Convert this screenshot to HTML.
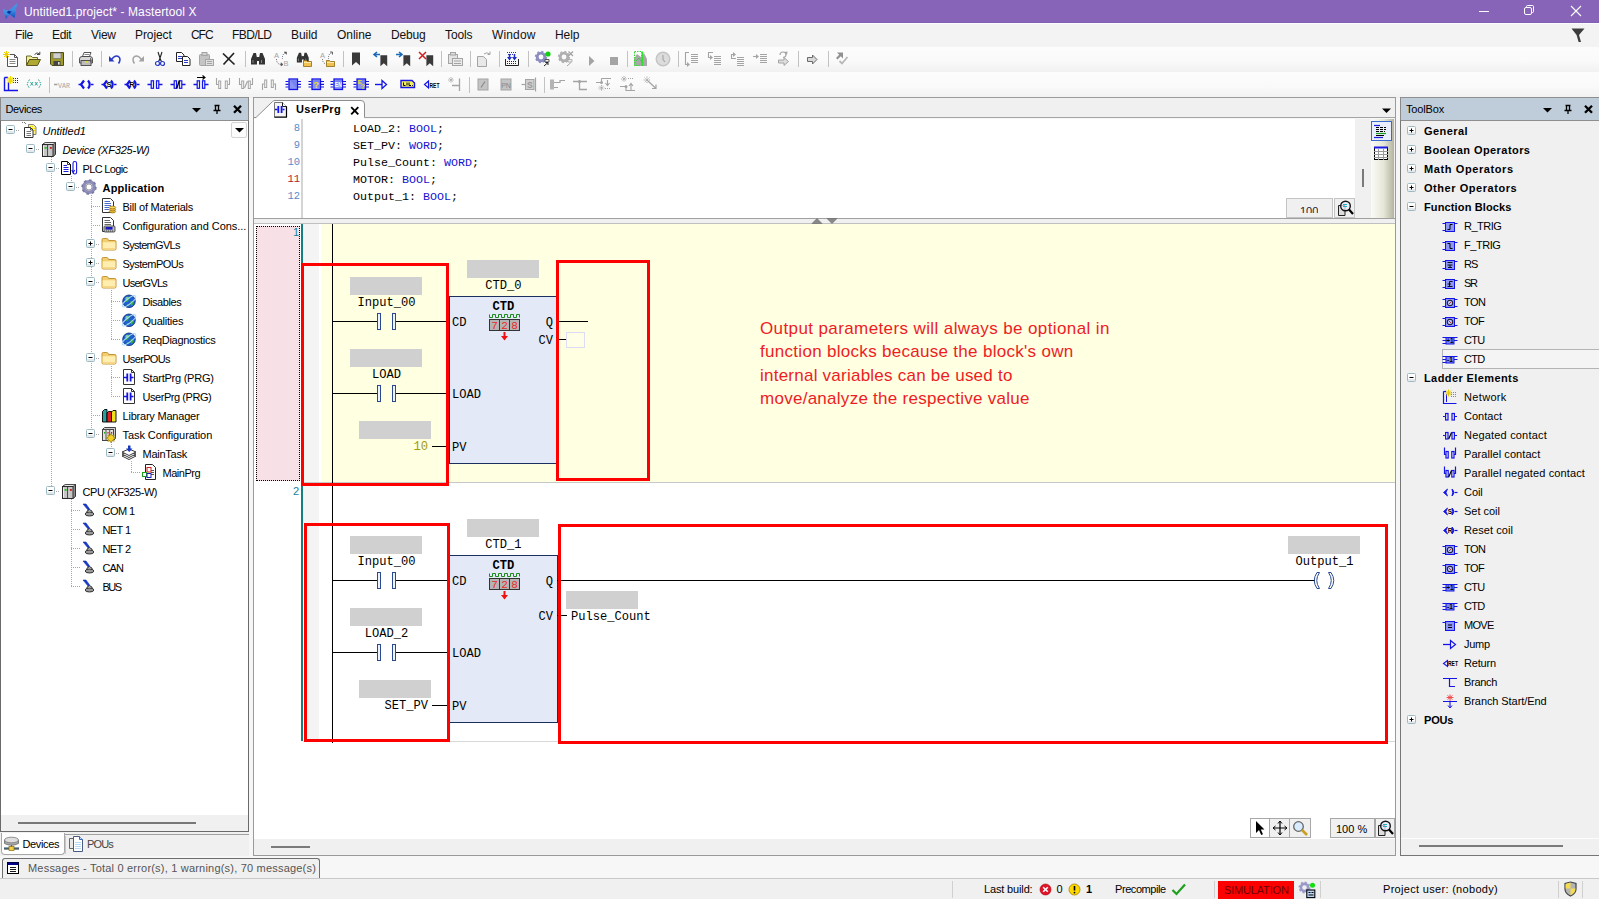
<!DOCTYPE html>
<html><head><meta charset="utf-8"><title>Mastertool X</title><style>
html,body{margin:0;padding:0}
body{width:1599px;height:899px;overflow:hidden;background:#f0f0f0;position:relative;font-family:"Liberation Sans","DejaVu Sans",sans-serif;font-size:11px;color:#000}
div,svg{position:absolute;box-sizing:border-box}
.t{white-space:nowrap;line-height:14px;height:14px}
.m{white-space:nowrap;line-height:16px;height:16px;font-size:12.5px;color:#111}
.c{white-space:nowrap;line-height:15px;height:15px;font-family:"Liberation Mono","DejaVu Sans Mono",monospace;font-size:11.67px}
.b{font-weight:bold}
.i{font-style:italic}
svg{overflow:visible}
</style></head><body>
<div style="left:0px;top:0px;width:1599px;height:23px;background:#8764b8"></div>
<div style="left:0px;top:22px;width:1599px;height:1px;background:#8260b3"></div>
<svg style="left:0px;top:0px" width="22" height="22" viewBox="0 0 22 22" ><defs><linearGradient id="lg1" x1="0" y1="0" x2="0" y2="1"><stop offset="0" stop-color="#4a96e2"/><stop offset="0.5" stop-color="#3f8ce0"/><stop offset="1" stop-color="#0a50c4"/></linearGradient></defs><path d="M17.3 3 L14.6 18 L6.6 12.2 Z" fill="url(#lg1)"/><path d="M2.6 9 L11.6 11.6 L6 18.9 Z" fill="url(#lg1)"/><path d="M6.6 12.2 L8.6 10.7 L11.6 11.6 L9.4 14.3 Z" fill="#0634a8"/></svg>
<div class="t" style="left:24px;top:4px;color:#fff;line-height:16px;height:16px;font-size:12px;letter-spacing:0.094px;">Untitled1.project* - Mastertool X</div>
<svg style="left:1478px;top:5px" width="12" height="12" viewBox="0 0 12 12" ><path d="M1 6.5 H11" stroke="#fff" stroke-width="1"/></svg>
<svg style="left:1523px;top:4px" width="12" height="12" viewBox="0 0 12 12" ><rect x="1.5" y="3.5" width="7" height="7" rx="1.5" fill="none" stroke="#fff"/><path d="M3.5 3.5 V2.5 Q3.5 1.5 4.5 1.5 H9.5 Q10.5 1.5 10.5 2.5 V7.5 Q10.5 8.5 9.5 8.5 H8.5" fill="none" stroke="#fff"/></svg>
<svg style="left:1570px;top:5px" width="12" height="12" viewBox="0 0 12 12" ><path d="M1 1 L11 11 M11 1 L1 11" stroke="#fff" stroke-width="1.1"/></svg>
<div style="left:0px;top:23px;width:1599px;height:24px;background:#f3f3f3;border-top:1px solid #fbfbfb"></div>
<div class="m" style="left:15px;top:27px;font-size:12px;letter-spacing:-0.384px;">File</div>
<div class="m" style="left:52px;top:27px;font-size:12px;letter-spacing:-0.344px;">Edit</div>
<div class="m" style="left:91px;top:27px;font-size:12px;letter-spacing:-0.273px;">View</div>
<div class="m" style="left:135px;top:27px;font-size:12px;letter-spacing:-0.078px;">Project</div>
<div class="m" style="left:191px;top:27px;font-size:12px;letter-spacing:-1.054px;">CFC</div>
<div class="m" style="left:232px;top:27px;font-size:12px;letter-spacing:-0.529px;">FBD/LD</div>
<div class="m" style="left:291px;top:27px;font-size:12px;letter-spacing:-0.037px;">Build</div>
<div class="m" style="left:337px;top:27px;font-size:12px;letter-spacing:-0.031px;">Online</div>
<div class="m" style="left:391px;top:27px;font-size:12px;letter-spacing:-0.172px;">Debug</div>
<div class="m" style="left:445px;top:27px;font-size:12px;letter-spacing:-0.102px;">Tools</div>
<div class="m" style="left:492px;top:27px;font-size:12px;letter-spacing:0.137px;">Window</div>
<div class="m" style="left:555px;top:27px;font-size:12px;letter-spacing:-0.045px;">Help</div>
<svg style="left:1570px;top:27px" width="16" height="16" viewBox="0 0 16 16" ><path d="M1.5 1.5 H14.5 L9 8 L11 15 L8.6 15 L6.6 8 Z" fill="#3c3c3c"/></svg>
<div style="left:0px;top:47px;width:1599px;height:25px;background:linear-gradient(#fcfcfc,#fafafa 55%,#f1f1f1)"></div>
<div style="left:0px;top:72px;width:1599px;height:25px;background:linear-gradient(#fcfcfc,#fafafa 55%,#f2f2f2)"></div>
<div style="left:0px;top:97px;width:1599px;height:1px;background:#ededed"></div>
<svg style="left:3px;top:51px" width="16" height="16" viewBox="0 0 16 16" ><path d="M4.5 3.5 H11.5 L14.5 6.5 V15.5 H4.5 Z" fill="#fff" stroke="#555"/><path d="M11.5 3.5 V6.5 H14.5" fill="none" stroke="#555"/><path d="M6.5 8.5 H12.5 M6.5 10.5 H12.5 M6.5 12.5 H12.5" stroke="#888"/><path d="M3.5 0 V7 M0 3.5 H7 M1 1 L6 6 M6 1 L1 6" stroke="#f0d000" stroke-width="1"/></svg>
<svg style="left:25px;top:51px" width="16" height="16" viewBox="0 0 16 16" ><path d="M1.5 5 H6 L7.5 6.5 H12.5 V9 H4.5 L1.5 14 Z" fill="#f2ee9a" stroke="#5a5a20" stroke-width="0.9"/><path d="M1.5 14.5 L4.5 8.5 H15.5 L12.5 14.5 Z" fill="#b0a830" stroke="#4a4a18" stroke-width="0.9"/><path d="M9.5 3.5 Q12 0.5 14.5 3 M14.8 0.8 V3.5 H12" fill="none" stroke="#333" stroke-width="0.9"/></svg>
<svg style="left:49px;top:51px" width="16" height="16" viewBox="0 0 16 16" ><path d="M1.5 1.5 H14.5 V14.5 H3 L1.5 13 Z" fill="#a09a28" stroke="#4a4a18"/><rect x="4" y="2" width="8" height="5.5" fill="#d0d0d0" stroke="#666" stroke-width="0.6"/><rect x="4.5" y="10" width="7" height="4.5" fill="#444"/><rect x="9" y="11" width="1.6" height="2.6" fill="#ddd"/></svg>
<div style="left:72px;top:51px;width:1px;height:16px;background:#c2c2c2"></div>
<svg style="left:78px;top:51px" width="16" height="16" viewBox="0 0 16 16" ><path d="M4.5 5.5 L6 1.5 H13 L11.5 5.5 Z" fill="#fff" stroke="#444" stroke-width="0.9"/><path d="M6.5 3.5 H11.5" stroke="#888"/><path d="M1.5 8 Q1.5 5.5 4 5.5 H12 Q14.5 5.5 14.5 8 V12 H1.5 Z" fill="#d8d8d8" stroke="#444" stroke-width="0.9"/><rect x="3" y="9.5" width="10" height="5" fill="#bbb" stroke="#444" stroke-width="0.9"/><path d="M7 10.8 H10" stroke="#f0e000" stroke-width="1.4"/><path d="M12.5 7 v4 M14 8 v3" stroke="#555" stroke-width="0.8"/></svg>
<div style="left:101px;top:51px;width:1px;height:16px;background:#c2c2c2"></div>
<svg style="left:107px;top:51px" width="16" height="16" viewBox="0 0 16 16" ><path d="M4.5 8.5 Q8 3.5 11.5 5.5 Q14.5 8 11.5 12.5" fill="none" stroke="#2a3ac8" stroke-width="1.5"/><path d="M2 5 V10.5 H7.5 Z" fill="#2a3ac8"/></svg>
<svg style="left:130px;top:51px" width="16" height="16" viewBox="0 0 16 16" ><g transform="translate(16,0) scale(-1,1)"><path d="M4.5 8.5 Q8 3.5 11.5 5.5 Q14.5 8 11.5 12.5" fill="none" stroke="#a4a4a4" stroke-width="1.5"/><path d="M2 5 V10.5 H7.5 Z" fill="#a4a4a4"/></g></svg>
<svg style="left:152px;top:51px" width="16" height="16" viewBox="0 0 16 16" ><path d="M6 1 L9 10 M10 1 L7 10" stroke="#222" stroke-width="1.1"/><circle cx="5.5" cy="12.5" r="2" fill="none" stroke="#2a3ac8" stroke-width="1.2"/><circle cx="10.5" cy="12.5" r="2" fill="none" stroke="#2a3ac8" stroke-width="1.2"/><path d="M7 9.5 L6.3 10.8 M9 9.5 L9.7 10.8" stroke="#2a3ac8" stroke-width="1.2"/></svg>
<svg style="left:175px;top:51px" width="16" height="16" viewBox="0 0 16 16" ><path d="M1.5 1.5 H6.5 L9 4 V10.5 H1.5 Z" fill="#fff" stroke="#222"/><path d="M3 5.5 H7 M3 7.5 H7" stroke="#2a3ac8"/><path d="M7.5 5.5 H12.5 L15 8 V14.5 H7.5 Z" fill="#fff" stroke="#222"/><path d="M9 9.5 H13 M9 11.5 H13" stroke="#2a3ac8"/></svg>
<svg style="left:198px;top:51px" width="16" height="16" viewBox="0 0 16 16" ><rect x="1.5" y="3.5" width="10" height="11" rx="1" fill="#c4c4c4" stroke="#a4a4a4"/><rect x="4" y="1.5" width="5" height="3" fill="#d0d0d0" stroke="#a4a4a4"/><rect x="7.5" y="8.5" width="8" height="6" fill="#e0e0e0" stroke="#a4a4a4"/><path d="M9 10.5 H14 M9 12.5 H14" stroke="#a4a4a4"/></svg>
<svg style="left:221px;top:51px" width="16" height="16" viewBox="0 0 16 16" ><path d="M2 2.5 L13.5 13.5 M13 2 L2.5 13.5" stroke="#222" stroke-width="1.7"/></svg>
<div style="left:245px;top:51px;width:1px;height:16px;background:#c2c2c2"></div>
<svg style="left:250px;top:51px" width="16" height="16" viewBox="0 0 16 16" ><path d="M3.5 2 H6 L7 7 V13.5 H1 V8 Z M10 2 H12.5 L15 8 V13.5 H9 V7 Z" fill="#333"/><rect x="6.5" y="6" width="3" height="4" fill="#333"/><path d="M3 9 V12 M11.5 9 V12" stroke="#999" stroke-width="0.8"/></svg>
<svg style="left:273px;top:51px" width="16" height="16" viewBox="0 0 16 16" ><text x="1" y="7" font-size="7.5" fill="#a4a4a4" font-family="Liberation Sans,sans-serif">A</text><text x="10.5" y="15" font-size="7.5" fill="#a4a4a4" font-family="Liberation Sans,sans-serif">B</text><path d="M3.5 8 Q3.5 13 8 13.5" fill="none" stroke="#555" stroke-dasharray="1 1.2"/><path d="M12.5 2 Q9 3 9.5 8" fill="none" stroke="#555" stroke-dasharray="1 1.2"/><path d="M8 11.8 L10 13.5 L8 15 Z M11 1 H13.5 V3.5" fill="#555" stroke="#555" stroke-width="0.6"/></svg>
<svg style="left:296px;top:51px" width="16" height="16" viewBox="0 0 16 16" ><g transform="scale(0.85)"><path d="M3.5 2 H6 L7 7 V13.5 H1 V8 Z M10 2 H12.5 L15 8 V13.5 H9 V7 Z" fill="#333"/><rect x="6.5" y="6" width="3" height="4" fill="#333"/><path d="M3 9 V12 M11.5 9 V12" stroke="#999" stroke-width="0.8"/></g><path d="M7.5 9.5 H10.5 L11.5 10.5 H15.5 V15.5 H7.5 Z" fill="#f0c050" stroke="#8a6a10" stroke-width="0.8"/><path d="M8 11.5 H15" stroke="#fbe8a8"/></svg>
<svg style="left:319px;top:51px" width="16" height="16" viewBox="0 0 16 16" ><text x="1" y="7" font-size="7.5" fill="#a4a4a4" font-family="Liberation Sans,sans-serif">A</text><path d="M3.5 8 Q3.5 12 7 13" fill="none" stroke="#555" stroke-dasharray="1 1.2"/><path d="M12.5 2 Q9 3 9.5 8" fill="none" stroke="#555" stroke-dasharray="1 1.2"/><path d="M11 1 H13.5 V3.5" fill="none" stroke="#555" stroke-width="0.9"/><path d="M7.5 9.5 H10.5 L11.5 10.5 H15.5 V15.5 H7.5 Z" fill="#f0c050" stroke="#8a6a10" stroke-width="0.8"/><path d="M8 11.5 H15" stroke="#fbe8a8"/></svg>
<div style="left:343px;top:51px;width:1px;height:16px;background:#c2c2c2"></div>
<svg style="left:348px;top:51px" width="16" height="16" viewBox="0 0 16 16" ><path transform="translate(0,0) scale(1)" d="M4 1.5 H12 V14.5 L8 11 L4 14.5 Z" fill="#3a3a3a"/></svg>
<svg style="left:372px;top:51px" width="16" height="16" viewBox="0 0 16 16" ><path transform="translate(5,3) scale(0.85)" d="M4 1.5 H12 V14.5 L8 11 L4 14.5 Z" fill="#3a3a3a"/><path d="M8 3.5 H2.5 M5 1 L2 3.5 L5 6" fill="none" stroke="#1a6ab8" stroke-width="1.6"/></svg>
<svg style="left:395px;top:51px" width="16" height="16" viewBox="0 0 16 16" ><path transform="translate(5,3) scale(0.85)" d="M4 1.5 H12 V14.5 L8 11 L4 14.5 Z" fill="#3a3a3a"/><path d="M1 3.5 H6.5 M4 1 L7 3.5 L4 6" fill="none" stroke="#1a6ab8" stroke-width="1.6"/></svg>
<svg style="left:418px;top:51px" width="16" height="16" viewBox="0 0 16 16" ><path transform="translate(5,3) scale(0.85)" d="M4 1.5 H12 V14.5 L8 11 L4 14.5 Z" fill="#3a3a3a"/><path d="M1 1 L8 8 M8 1 L1 8" stroke="#d02020" stroke-width="1.5"/></svg>
<div style="left:441px;top:51px;width:1px;height:16px;background:#c2c2c2"></div>
<svg style="left:447px;top:51px" width="16" height="16" viewBox="0 0 16 16" ><rect x="1.5" y="3.5" width="9" height="9" fill="#e4e4e4" stroke="#a4a4a4"/><rect x="3.5" y="1.5" width="5" height="2.5" fill="#ddd" stroke="#a4a4a4"/><rect x="5.5" y="7.5" width="10" height="7" fill="#ececec" stroke="#a4a4a4"/><path d="M7 10 H14 M7 12.5 H14" stroke="#a4a4a4"/></svg>
<div style="left:470px;top:51px;width:1px;height:16px;background:#c2c2c2"></div>
<svg style="left:475px;top:51px" width="16" height="16" viewBox="0 0 16 16" ><path d="M2.5 5.5 H8.5 L11.5 8.5 V15.5 H2.5 Z" fill="#e8e8e8" stroke="#a4a4a4"/><path d="M9 3 Q12 0.5 14.5 3 M15 0.5 V3.5 H12.5" fill="none" stroke="#a4a4a4"/></svg>
<div style="left:499px;top:51px;width:1px;height:16px;background:#c2c2c2"></div>
<svg style="left:504px;top:51px" width="16" height="16" viewBox="0 0 16 16" ><path d="M1.5 8 V14.5 H14.5 V8" fill="none" stroke="#222"/><path d="M3 10.5 H13 M3 12.5 H13" stroke="#222" stroke-dasharray="1 1"/><path d="M3 1.5 H13 M4 3.5 H12" stroke="#2030c0" stroke-dasharray="1 1"/><path d="M5.5 3 V8 M10.5 3 V8" stroke="#2030c0" stroke-width="1.5"/><path d="M3 6 L5.5 9.5 L8 6 Z M8 6 L10.5 9.5 L13 6 Z" fill="#2030c0"/></svg>
<div style="left:528px;top:51px;width:1px;height:16px;background:#c2c2c2"></div>
<svg style="left:535px;top:51px" width="16" height="16" viewBox="0 0 16 16" ><circle cx="6" cy="6" r="3.8" fill="none" stroke="#8c8cc0" stroke-width="2.8"/><circle cx="6" cy="6" r="5.4" fill="none" stroke="#8c8cc0" stroke-width="1.5" stroke-dasharray="2 2.2"/><circle cx="13" cy="3" r="2.6" fill="#10d010"/><path d="M10 8.5 H14 V11 H10 Z" fill="#eee" stroke="#333" stroke-width="0.8"/><path d="M9 15 L13 11.5 M13 11.5 V14 M13 11.5 H10.5" stroke="#222" stroke-width="1" fill="none"/></svg>
<svg style="left:558px;top:51px" width="16" height="16" viewBox="0 0 16 16" ><circle cx="6" cy="6" r="3.8" fill="none" stroke="#b0b0b0" stroke-width="2.8"/><circle cx="6" cy="6" r="5.4" fill="none" stroke="#b0b0b0" stroke-width="1.5" stroke-dasharray="2 2.2"/><path d="M10.5 0.5 L15 5 M15 0.5 L10.5 5" stroke="#a4a4a4" stroke-width="1.2"/><path d="M10 8.5 H14 V11 H10 Z" fill="#eee" stroke="#a4a4a4" stroke-width="0.8"/><path d="M9 15 L13 11.5" stroke="#a4a4a4" stroke-width="1"/></svg>
<svg style="left:584px;top:51px" width="16" height="16" viewBox="0 0 16 16" ><path d="M5 5 L10.5 10 L5 15 Z" fill="#a4a4a4"/></svg>
<svg style="left:606px;top:51px" width="16" height="16" viewBox="0 0 16 16" ><rect x="4" y="6" width="8" height="8" fill="#a4a4a4"/></svg>
<div style="left:627px;top:51px;width:1px;height:16px;background:#c2c2c2"></div>
<svg style="left:632px;top:51px" width="16" height="16" viewBox="0 0 16 16" ><path d="M2 8 L5 3 L9 6 L12 2 L15 8 V15 H2 Z" fill="#a8a8a8"/><rect x="2.5" y="0.5" width="7" height="14" fill="none" stroke="#30e030" stroke-dasharray="1.5 1"/><path d="M10.5 0.5 V15" stroke="#30e030" stroke-width="1.3"/><path d="M4 10 L7 7 L10 11" stroke="#50c050" fill="none"/></svg>
<svg style="left:655px;top:51px" width="16" height="16" viewBox="0 0 16 16" ><circle cx="8" cy="8" r="6.8" fill="#dcdcdc" stroke="#c4c4c4" stroke-width="1.4"/><path d="M8 4 V8.5 L10 11" stroke="#a4a4a4" stroke-width="1.1" fill="none"/></svg>
<div style="left:678px;top:51px;width:1px;height:16px;background:#c2c2c2"></div>
<svg style="left:683px;top:51px" width="16" height="16" viewBox="0 0 16 16" ><path d="M8 3.5 H15 M8 5.5 H15 M8 7.5 H15 M8 9.5 H15 M8 11.5 H15" stroke="#a4a4a4"/><path d="M6 1.5 H2.5 V13.5 H5" fill="none" stroke="#a4a4a4" stroke-width="1.1"/><path d="M4 11 L7 13.5 L4 16 Z" fill="#a4a4a4"/></svg>
<svg style="left:706px;top:51px" width="16" height="16" viewBox="0 0 16 16" ><path d="M8 5.5 H15 M8 7.5 H15 M8 9.5 H15 M8 11.5 H15 M8 13.5 H15" stroke="#a4a4a4"/><path d="M7 1.5 H2.5 V6.5 H5" fill="none" stroke="#a4a4a4" stroke-width="1.1"/><path d="M4 4 L7 6.5 L4 9 Z" fill="#a4a4a4"/></svg>
<svg style="left:729px;top:51px" width="16" height="16" viewBox="0 0 16 16" ><path d="M8 6.5 H15 M8 8.5 H15 M8 10.5 H15 M8 12.5 H15 M8 14.5 H15" stroke="#a4a4a4"/><path d="M7 7.5 H2.5 V3.5 H5" fill="none" stroke="#a4a4a4" stroke-width="1.1"/><path d="M4 1 L7 3.5 L4 6 Z" fill="#a4a4a4"/></svg>
<svg style="left:752px;top:51px" width="16" height="16" viewBox="0 0 16 16" ><path d="M8 3.5 H15 M8 5.5 H15 M8 7.5 H15 M8 9.5 H15 M8 11.5 H15" stroke="#a4a4a4"/><path d="M1 5.5 H5" stroke="#a4a4a4" stroke-width="1.1"/><path d="M4 3 L7 5.5 L4 8 Z" fill="#a4a4a4"/></svg>
<svg style="left:775px;top:51px" width="16" height="16" viewBox="0 0 16 16" ><path d="M5 4 Q5 1 8 1 Q11 1 11 4 Q11 6 8 6.5" fill="none" stroke="#a4a4a4" stroke-width="1.1"/><path d="M9 1 L12.5 0.5 L12 4 Z" fill="#a4a4a4"/><path d="M3.5 9 H9 V6.5 L13.5 10.5 L9 14.5 V12 H3.5 Z" fill="#ddd" stroke="#a4a4a4"/></svg>
<div style="left:798px;top:51px;width:1px;height:16px;background:#c2c2c2"></div>
<svg style="left:804px;top:51px" width="16" height="16" viewBox="0 0 16 16" ><path d="M3.5 6.5 H8.5 V4 L13 8.5 L8.5 13 V10.5 H3.5 Z" fill="#d8d8d8" stroke="#6a6a6a" stroke-width="1"/></svg>
<div style="left:828px;top:51px;width:1px;height:16px;background:#c2c2c2"></div>
<svg style="left:834px;top:51px" width="16" height="16" viewBox="0 0 16 16" ><path d="M3 1.5 H9 V7.5 L6.8 5.3 L3.5 8.5 L2 7 L5.2 3.7 Z" fill="#909090"/><path d="M5.5 10 L8 12.5 L13.5 6" fill="none" stroke="#b8b8b8" stroke-width="1.8"/></svg>
<svg style="left:3px;top:76px" width="16" height="16" viewBox="0 0 16 16" ><path d="M1.5 1.5 V14.5 H15 M1.5 1.5 H5" stroke="#1414e6" fill="none" stroke-width="1.4"/><path d="M5.5 6 V14" stroke="#1414e6" stroke-width="1.4"/><path d="M10 2.5 H16 M10 4.5 H16 M10 6.5 H16" stroke="#1414e6" stroke-dasharray="1 1"/><path d="M7.5 0 V8 M3.5 4 H11.5 M4.8 1.3 L10.2 6.7 M10.2 1.3 L4.8 6.7" stroke="#f2dc00" stroke-width="1.1"/></svg>
<svg style="left:26px;top:76px" width="16" height="16" viewBox="0 0 16 16" ><path d="M3.5 3.5 L1 8 L3.5 12.5 M12.5 3.5 L15 8 L12.5 12.5" fill="none" stroke="#20a090" stroke-dasharray="1.6 1"/><path d="M4.5 6 L7 9.5 M7 6 L4.5 9.5 M9 6 L11.5 9.5 M11.5 6 L9 9.5" stroke="#20a090" stroke-width="0.9"/></svg>
<div style="left:49px;top:77px;width:1px;height:16px;background:#c2c2c2"></div>
<svg style="left:54px;top:76px" width="16" height="16" viewBox="0 0 16 16" ><path d="M0 8.5 H3.5" stroke="#a4a4a4" stroke-width="1.6"/><text x="4" y="11.5" font-size="7.5" fill="#a4a4a4" font-family="Liberation Mono,monospace" textLength="12" lengthAdjust="spacingAndGlyphs">VAR</text></svg>
<svg style="left:78px;top:76px" width="16" height="16" viewBox="0 0 16 16" ><path d="M0.5 8.5 H3 M13 8.5 H15.5" stroke="#1414e6" stroke-width="1.3"/><path d="M6 4.5 L3 8.5 L6 12.5 M10 4.5 Q13.5 8.5 10 12.5" stroke="#1414e6" stroke-width="2.2" fill="none"/></svg>
<svg style="left:101px;top:76px" width="16" height="16" viewBox="0 0 16 16" ><path d="M0.5 8.5 H3 M13 8.5 H15.5" stroke="#1414e6" stroke-width="1.3"/><path d="M6 4.5 L3 8.5 L6 12.5 M10 4.5 Q13.5 8.5 10 12.5" stroke="#1414e6" stroke-width="2.2" fill="none"/><text x="8" y="11.2" font-size="7.5" font-weight="bold" text-anchor="middle" fill="#000" font-family="Liberation Sans,sans-serif">S</text></svg>
<svg style="left:124px;top:76px" width="16" height="16" viewBox="0 0 16 16" ><path d="M0.5 8.5 H3 M13 8.5 H15.5" stroke="#1414e6" stroke-width="1.3"/><path d="M6 4.5 L3 8.5 L6 12.5 M10 4.5 Q13.5 8.5 10 12.5" stroke="#1414e6" stroke-width="2.2" fill="none"/><text x="8" y="11.2" font-size="7.5" font-weight="bold" text-anchor="middle" fill="#000" font-family="Liberation Sans,sans-serif">R</text></svg>
<svg style="left:147px;top:76px" width="16" height="16" viewBox="0 0 16 16" ><path d="M0.5 8.5 H4 M12 8.5 H15.5" stroke="#1414e6" stroke-width="1.3"/><rect x="4.2" y="4.8" width="2.3" height="7.5" fill="none" stroke="#1414e6" stroke-width="1.2"/><rect x="9.5" y="4.8" width="2.3" height="7.5" fill="none" stroke="#1414e6" stroke-width="1.2"/></svg>
<svg style="left:170px;top:76px" width="16" height="16" viewBox="0 0 16 16" ><path d="M0.5 8.5 H4 M12 8.5 H15.5" stroke="#1414e6" stroke-width="1.3"/><rect x="4.2" y="4.8" width="2.3" height="7.5" fill="none" stroke="#1414e6" stroke-width="1.2"/><rect x="9.5" y="4.8" width="2.3" height="7.5" fill="none" stroke="#1414e6" stroke-width="1.2"/><path d="M6.8 12.5 L9.3 4.5" stroke="#000" stroke-width="1.3"/></svg>
<svg style="left:193px;top:76px" width="16" height="16" viewBox="0 0 16 16" ><path d="M0.5 8.5 H4 M12 8.5 H15.5" stroke="#1414e6" stroke-width="1.3"/><rect x="4.2" y="4.8" width="2.3" height="7.5" fill="none" stroke="#1414e6" stroke-width="1.2"/><rect x="9.5" y="4.8" width="2.3" height="7.5" fill="none" stroke="#1414e6" stroke-width="1.2"/><path d="M4 1.5 H11.5 M9.5 -0.5 L12 1.5 L9.5 3.5" stroke="#000" stroke-width="1.1" fill="none"/></svg>
<svg style="left:215px;top:76px" width="16" height="16" viewBox="0 0 16 16" ><path d="M1.5 2 V8.5 H3.5 M14.5 2 V8.5 H12.5" stroke="#a4a4a4" stroke-width="1.1" fill="none"/><rect x="3.7" y="5" width="2" height="7.5" fill="none" stroke="#a4a4a4"/><rect x="10.3" y="5" width="2" height="7.5" fill="none" stroke="#a4a4a4"/></svg>
<svg style="left:238px;top:76px" width="16" height="16" viewBox="0 0 16 16" ><path d="M1.5 2 V8.5 H3.5 M14.5 2 V8.5 H12.5" stroke="#a4a4a4" stroke-width="1.1" fill="none"/><rect x="3.7" y="5" width="2" height="7.5" fill="none" stroke="#a4a4a4"/><rect x="10.3" y="5" width="2" height="7.5" fill="none" stroke="#a4a4a4"/><path d="M6.5 12 L9.5 5" stroke="#a4a4a4" stroke-width="1.2"/></svg>
<svg style="left:261px;top:76px" width="16" height="16" viewBox="0 0 16 16" ><path d="M1.5 14 V8 H3.5 M14.5 14 V8 H12.5" stroke="#a4a4a4" stroke-width="1.1" fill="none"/><rect x="3.7" y="4" width="2" height="7.5" fill="none" stroke="#a4a4a4"/><rect x="10.3" y="4" width="2" height="7.5" fill="none" stroke="#a4a4a4"/></svg>
<svg style="left:285px;top:76px" width="16" height="16" viewBox="0 0 16 16" ><rect x="4" y="3" width="8.5" height="10.5" fill="#8a94f4" stroke="#1414e6" stroke-width="1.3"/><path d="M4.6 3.6 H12 V13 Z" fill="#6a76ee" opacity="0.6"/><path d="M0.5 5.5 H3.5 M0.5 8.3 H3.5 M0.5 11 H3.5 M13 5.5 H16 M13 8.3 H16 M13 11 H16" stroke="#1414e6" stroke-width="1.2"/></svg>
<svg style="left:308px;top:76px" width="16" height="16" viewBox="0 0 16 16" ><rect x="4" y="3" width="8.5" height="10.5" fill="#8a94f4" stroke="#1414e6" stroke-width="1.3"/><path d="M4.6 3.6 H12 V13 Z" fill="#6a76ee" opacity="0.6"/><path d="M0.5 5.5 H3.5 M0.5 8.3 H3.5 M0.5 11 H3.5 M13 5.5 H16 M13 8.3 H16 M13 11 H16" stroke="#1414e6" stroke-width="1.2"/><text x="8.3" y="11.5" font-size="9" font-weight="bold" text-anchor="middle" fill="#f0e020" font-family="Liberation Sans,sans-serif">?</text></svg>
<svg style="left:330px;top:76px" width="16" height="16" viewBox="0 0 16 16" ><rect x="4" y="3" width="8.5" height="10.5" fill="#8a94f4" stroke="#1414e6" stroke-width="1.3"/><path d="M4.6 3.6 H12 V13 Z" fill="#6a76ee" opacity="0.6"/><path d="M0.5 5.5 H3.5 M0.5 8.3 H3.5 M0.5 11 H3.5 M13 5.5 H16 M13 8.3 H16 M13 11 H16" stroke="#1414e6" stroke-width="1.2"/><text x="8.3" y="10.5" font-size="6.5" font-weight="bold" text-anchor="middle" fill="#fff" font-family="Liberation Sans,sans-serif" textLength="7" lengthAdjust="spacingAndGlyphs">EN</text></svg>
<svg style="left:353px;top:76px" width="16" height="16" viewBox="0 0 16 16" ><rect x="4" y="3" width="8.5" height="10.5" fill="#8a94f4" stroke="#1414e6" stroke-width="1.3"/><path d="M4.6 3.6 H12 V13 Z" fill="#6a76ee" opacity="0.6"/><path d="M0.5 5.5 H3.5 M0.5 8.3 H3.5 M0.5 11 H3.5 M13 5.5 H16 M13 8.3 H16 M13 11 H16" stroke="#1414e6" stroke-width="1.2"/><text x="6.8" y="8" font-size="6" font-weight="bold" text-anchor="middle" fill="#f0e020" font-family="Liberation Sans,sans-serif">E</text><text x="9.8" y="12.8" font-size="7" font-weight="bold" text-anchor="middle" fill="#f0e020" font-family="Liberation Sans,sans-serif">?</text></svg>
<svg style="left:374px;top:76px" width="16" height="16" viewBox="0 0 16 16" ><path d="M1 8.5 H8" stroke="#1414e6" stroke-width="1.4"/><path d="M8 4.5 L12.5 8.5 L8 12.5 Z" fill="none" stroke="#1414e6" stroke-width="1.3"/></svg>
<svg style="left:400px;top:76px" width="16" height="16" viewBox="0 0 16 16" ><path d="M1 4.5 H12 L14.5 7 V11.5 H1 Z" fill="#f4f060" stroke="#1414e6" stroke-width="1.4"/><path d="M3.5 6.5 V9.5 H5.5 M7 6.5 V9.5 M9 6.5 V9.5 H11 M12.5 9 V9.8" stroke="#000" stroke-width="1" fill="none"/></svg>
<svg style="left:423px;top:76px" width="16" height="16" viewBox="0 0 16 16" ><path d="M5.5 5 L1.5 8.5 L5.5 12 Z" fill="none" stroke="#1414e6" stroke-width="1.2"/><text x="6.5" y="11.5" font-size="7.5" font-weight="bold" fill="#000" font-family="Liberation Sans,sans-serif" textLength="10" lengthAdjust="spacingAndGlyphs">RET</text></svg>
<svg style="left:446px;top:76px" width="16" height="16" viewBox="0 0 16 16" ><path d="M5 1 V7 M2 4 H8 M2.9000000000000004 1.9000000000000004 L7.1 6.1 M7.1 1.9000000000000004 L2.9000000000000004 6.1" stroke="#a4a4a4" stroke-width="0.9" stroke-dasharray="1.2 0.6"/><path d="M6 9.5 H13.5 M13.5 2.5 V15" stroke="#a4a4a4" stroke-width="1.3" fill="none"/></svg>
<div style="left:469px;top:77px;width:1px;height:16px;background:#c2c2c2"></div>
<svg style="left:475px;top:76px" width="16" height="16" viewBox="0 0 16 16" ><rect x="3" y="3" width="10" height="11" fill="#c4c4c4" stroke="#a4a4a4"/><path d="M6 11.5 L10 5.5" stroke="#8a8a8a" stroke-width="1.2"/></svg>
<svg style="left:498px;top:76px" width="16" height="16" viewBox="0 0 16 16" ><rect x="3" y="3" width="10" height="11" fill="#c4c4c4" stroke="#a4a4a4"/><text x="8" y="11.5" font-size="7" text-anchor="middle" fill="#888" font-family="Liberation Sans,sans-serif">PN</text></svg>
<svg style="left:521px;top:76px" width="16" height="16" viewBox="0 0 16 16" ><path d="M0.5 8.5 H4" stroke="#a4a4a4" stroke-width="1.2"/><rect x="4.5" y="3.5" width="8.5" height="10" fill="#d0d0d0" stroke="#a4a4a4"/><path d="M14.5 1.5 V15.5" stroke="#a4a4a4" stroke-width="1.2"/><text x="8.8" y="12" font-size="8.5" font-weight="bold" text-anchor="middle" fill="#999" font-family="Liberation Sans,sans-serif">S</text></svg>
<div style="left:544px;top:77px;width:1px;height:16px;background:#c2c2c2"></div>
<svg style="left:549px;top:76px" width="16" height="16" viewBox="0 0 16 16" ><rect x="1" y="3.5" width="4" height="10" fill="#b4b4b4"/><path d="M5 11.5 H9 M5 6.5 H11 V4.5 H16" stroke="#a4a4a4" stroke-width="1.2" fill="none"/></svg>
<svg style="left:572px;top:76px" width="16" height="16" viewBox="0 0 16 16" ><path d="M1 5.5 H15 M7.5 5.5 V13.5 H15" stroke="#a4a4a4" stroke-width="1.3" fill="none"/><circle cx="7.5" cy="5.5" r="1.6" fill="#a4a4a4"/></svg>
<svg style="left:595px;top:76px" width="16" height="16" viewBox="0 0 16 16" ><path d="M1 6.5 H6.5 M6.5 2.5 V6.5 M6.5 2.5 H16" stroke="#a4a4a4" stroke-width="1.1" fill="none"/><circle cx="6.5" cy="6.5" r="1.5" fill="#a4a4a4"/><path d="M12.5 4 V9 M10.5 7 L12.5 9.5 L14.5 7" stroke="#a4a4a4" fill="none" stroke-width="1.1"/><path d="M6.5 9 V15 M3.5 12 H9.5 M4.4 9.9 L8.6 14.1 M8.6 9.9 L4.4 14.1" stroke="#a4a4a4" stroke-width="0.9" stroke-dasharray="1.2 0.6"/><path d="M10 12.5 H16" stroke="#a4a4a4" stroke-dasharray="1 1"/></svg>
<svg style="left:619px;top:76px" width="16" height="16" viewBox="0 0 16 16" ><path d="M5 0 V6 M2 3 H8 M2.9000000000000004 0.9000000000000004 L7.1 5.1 M7.1 0.9000000000000004 L2.9000000000000004 5.1" stroke="#a4a4a4" stroke-width="0.9" stroke-dasharray="1.2 0.6"/><path d="M9 2.5 H15" stroke="#a4a4a4" stroke-dasharray="1 1"/><path d="M1 10.5 H7 M7 10.5 V14.5 H16" stroke="#a4a4a4" stroke-width="1.1" fill="none"/><circle cx="7" cy="10.5" r="1.5" fill="#a4a4a4"/><path d="M12 14 V8 M10 10 L12 7.5 L14 10" stroke="#a4a4a4" fill="none" stroke-width="1.1"/></svg>
<svg style="left:642px;top:76px" width="16" height="16" viewBox="0 0 16 16" ><path d="M5 0.5 V7.5 M1.5 4 H8.5 M2.5500000000000003 1.5500000000000003 L7.449999999999999 6.449999999999999 M7.449999999999999 1.5500000000000003 L2.5500000000000003 6.449999999999999" stroke="#a4a4a4" stroke-width="0.9" stroke-dasharray="1.2 0.6"/><path d="M6 5 L14 12.5 M14 8.5 V12.5 H10" stroke="#a4a4a4" stroke-width="1.2" fill="none"/></svg>
<div style="left:0px;top:98px;width:1599px;height:758px;background:#f6f6f6"></div>
<div style="left:0px;top:97px;width:249px;height:23px;background:#bfcddb;border-top:1px solid #8e8e8e;border-left:1px solid #8a8a8a;border-right:1px solid #8a8a8a"></div>
<div class="t" style="left:5.5px;top:102px;font-size:11px;letter-spacing:-0.375px;">Devices</div>
<svg style="left:190.5px;top:107px" width="12" height="8" viewBox="0 0 12 8" ><path d="M1 1 H10 L5.5 5.5 Z" fill="#000"/></svg>
<svg style="left:211.5px;top:104px" width="10" height="12" viewBox="0 0 10 12" ><path d="M2.5 1.5 H7.5 M3.5 1.5 V6 M6.5 1.5 V6 M1.5 6.5 H8.5 M5 6.5 V10" stroke="#000" stroke-width="1.3" fill="none"/></svg>
<svg style="left:231.5px;top:104px" width="11" height="10" viewBox="0 0 11 10" ><path d="M2 1.7 L9 8.7 M9 1.7 L2 8.7" stroke="#000" stroke-width="2.3"/></svg>
<div style="left:0px;top:120px;width:249px;height:712px;background:#fff;border:1px solid #6a6a6a;border-top:1px solid #8e8e8e"></div>
<div style="left:231px;top:122px;width:16px;height:16px;background:#fcfcfc;border:1px solid #d4d4d4;border-radius:2px"></div>
<svg style="left:234px;top:127px" width="11" height="7" viewBox="0 0 11 7" ><path d="M1 1 H10 L5.5 5.5 Z" fill="#000"/></svg>
<div style="left:1px;top:815px;width:247px;height:16px;background:#f0f0f0"></div>
<div style="left:18px;top:822px;width:178px;height:2px;background:#787878"></div>
<div style="left:0px;top:832px;width:249px;height:24px;background:#f0f0f0"></div>
<div style="left:1px;top:833px;width:64px;height:22px;background:#fff;border:1px solid #a8a8a8;border-top:none;border-radius:0 0 4px 4px"></div>
<div class="t" style="left:22.5px;top:837px;font-size:11px;letter-spacing:-0.346px;">Devices</div>
<div class="t" style="left:87px;top:837px;font-size:11px;letter-spacing:-0.834px;color:#444">POUs</div>
<div style="left:65px;top:836px;width:1px;height:18px;background:#c8c8c8"></div>
<div style="left:65px;top:834px;width:184px;height:1px;background:#a0a0a0"></div>
<svg style="left:3px;top:836px" width="17" height="16" viewBox="0 0 17 16" ><path d="M1.5 4 V7.5 Q8.5 11 15.5 7.5 V4" fill="#a8a8a8" stroke="#666" stroke-width="0.8"/><ellipse cx="8.5" cy="4" rx="7" ry="2.8" fill="#dedede" stroke="#777" stroke-width="0.8"/><path d="M8.5 9 V12" stroke="#555"/><path d="M1 12.5 H16" stroke="#222" stroke-width="2"/><path d="M1 12 H16" stroke="#7ab8e8" stroke-width="0.8"/><rect x="6" y="10.5" width="5" height="4" fill="#f0d040" stroke="#8a6a10" stroke-width="0.7"/></svg>
<svg style="left:69px;top:836px" width="15" height="16" viewBox="0 0 15 16" ><path d="M0.5 2.5 H6.5 V12.5 H0.5 Z" fill="#e8e8e8" stroke="#666"/><path d="M4.5 0.5 H10.5 L13.5 3.5 V15.5 H4.5 Z" fill="#fff" stroke="#4a5a80"/><path d="M6 6.5 H12 M6 8.5 H12 M6 10.5 H12 M6 12.5 H12" stroke="#b8d8f8"/><path d="M10.5 0.5 V3.5 H13.5" fill="#cfe0ff" stroke="#2a6ad0"/></svg>
<div style="left:0px;top:856px;width:1599px;height:23px;background:#f7f7f7"></div>
<div style="left:2px;top:858px;width:318px;height:21px;background:#f0f0f0;border:1px solid #6e6e6e;border-bottom:none;border-radius:3px 3px 0 0"></div>
<svg style="left:7px;top:862px" width="12" height="12" viewBox="0 0 12 12" ><rect x="0.5" y="0.5" width="11" height="11" fill="#fff" stroke="#000"/><rect x="0.5" y="0.5" width="11" height="2.5" fill="#00008b"/><path d="M3 5.5 H9 M3 7.5 H9 M3 9.5 H9" stroke="#000" stroke-width="0.9"/></svg>
<div class="t" style="left:28px;top:861px;color:#555;font-size:11px;letter-spacing:0.202px;">Messages - Total 0 error(s), 1 warning(s), 70 message(s)</div>
<div style="left:0px;top:878px;width:1599px;height:1px;background:#c9c9c9"></div>
<div style="left:0px;top:879px;width:1599px;height:20px;background:#f0f0f0"></div>
<div style="left:952px;top:881px;width:1px;height:17px;background:#d0d0d0"></div>
<div class="t" style="left:984px;top:882px;font-size:11px;letter-spacing:-0.149px;">Last build:</div>
<svg style="left:1039px;top:883px" width="13" height="13" viewBox="0 0 13 13" ><circle cx="6.5" cy="6.5" r="5.5" fill="#e0142a" stroke="#a00" stroke-width="0.6"/><path d="M4.2 4.2 L8.8 8.8 M8.8 4.2 L4.2 8.8" stroke="#fff" stroke-width="1.6"/></svg>
<div class="t" style="left:1056.5px;top:882px;font-size:11px">0</div>
<svg style="left:1068px;top:883px" width="13" height="13" viewBox="0 0 13 13" ><circle cx="6.5" cy="6.5" r="5.5" fill="#ffd800" stroke="#a08000" stroke-width="0.8"/><path d="M6.5 3 V7.5" stroke="#000" stroke-width="1.6"/><circle cx="6.5" cy="9.6" r="0.9" fill="#000"/></svg>
<div class="t" style="left:1086px;top:882px;font-size:11px;font-weight:bold">1</div>
<div class="t" style="left:1115px;top:882px;font-size:11px;letter-spacing:-0.432px;">Precompile</div>
<svg style="left:1171px;top:883px" width="16" height="13" viewBox="0 0 16 13" ><path d="M1.5 7 L5.5 11 L14 1.5" stroke="#1ea01e" stroke-width="2.2" fill="none"/></svg>
<div style="left:1214px;top:881px;width:1px;height:17px;background:#d0d0d0"></div>
<div style="left:1218px;top:881px;width:76px;height:18px;background:#ff0000"></div>
<div class="t" style="left:1224px;top:883px;font-size:11px;letter-spacing:-0.171px;color:#6a0000">SIMULATION</div>
<svg style="left:1298px;top:881px" width="18" height="18" viewBox="0 0 18 18" ><circle cx="6.5" cy="6.5" r="3.6" fill="none" stroke="#9a9ac8" stroke-width="2.6"/><circle cx="6.5" cy="6.5" r="5.3" fill="none" stroke="#9a9ac8" stroke-width="1.4" stroke-dasharray="2 2.1"/><circle cx="14.5" cy="4.3" r="2.5" fill="#10e010"/><rect x="8.8" y="9" width="8" height="7.6" fill="#b8d4f4" stroke="#000" stroke-width="1.1"/><path d="M10.5 11.5 H12.5 M13.5 11.5 H15.5 M10.5 14 H15.5" stroke="#000" stroke-width="1"/></svg>
<div style="left:1320px;top:881px;width:1px;height:17px;background:#d0d0d0"></div>
<div class="t" style="left:1383px;top:882px;font-size:11px;letter-spacing:0.309px;">Project user: (nobody)</div>
<div style="left:1558px;top:881px;width:1px;height:17px;background:#d0d0d0"></div>
<svg style="left:1564px;top:881px" width="13" height="16" viewBox="0 0 13 16" ><path d="M6.5 1 L12 2.5 V8 Q12 12.5 6.5 15 Q1 12.5 1 8 V2.5 Z" fill="#b4b4b4" stroke="#444" stroke-width="1.2"/><path d="M6.5 1.6 L1.6 3 V7.5 H6.5 Z" fill="#f4dc50"/><path d="M6.5 7.5 H11.4 V8 Q11.4 12 6.5 14.3 Z" fill="#f4dc50"/></svg>
<div style="left:1582px;top:881px;width:1px;height:17px;background:#d0d0d0"></div>
<div style="left:1400px;top:97px;width:199px;height:23px;background:#bfcddb;border-top:1px solid #8e8e8e;border-left:1px solid #8a8a8a"></div>
<div class="t" style="left:1406px;top:102px;font-size:11px;letter-spacing:-0.162px;">ToolBox</div>
<svg style="left:1541.5px;top:107px" width="12" height="8" viewBox="0 0 12 8" ><path d="M1 1 H10 L5.5 5.5 Z" fill="#000"/></svg>
<svg style="left:1562.5px;top:104px" width="10" height="12" viewBox="0 0 10 12" ><path d="M2.5 1.5 H7.5 M3.5 1.5 V6 M6.5 1.5 V6 M1.5 6.5 H8.5 M5 6.5 V10" stroke="#000" stroke-width="1.3" fill="none"/></svg>
<svg style="left:1582.5px;top:104px" width="11" height="10" viewBox="0 0 11 10" ><path d="M2 1.7 L9 8.7 M9 1.7 L2 8.7" stroke="#000" stroke-width="2.3"/></svg>
<div style="left:1400px;top:120px;width:199px;height:736px;background:#f0f0f0;border:1px solid #767676;border-right:none;border-top:1px solid #8e8e8e"></div>
<div style="left:1401px;top:838px;width:198px;height:1px;background:#fdfdfd"></div>
<div style="left:1419px;top:845px;width:144px;height:2px;background:#7a7a7a"></div>
<div style="left:51px;top:157px;width:1px;height:334px;background:repeating-linear-gradient(to bottom,#a8a8a8 0 1px,transparent 1px 2px)"></div>
<div style="left:71px;top:176px;width:1px;height:11px;background:repeating-linear-gradient(to bottom,#a8a8a8 0 1px,transparent 1px 2px)"></div>
<div style="left:91px;top:195px;width:1px;height:239px;background:repeating-linear-gradient(to bottom,#a8a8a8 0 1px,transparent 1px 2px)"></div>
<div style="left:111px;top:290px;width:1px;height:50px;background:repeating-linear-gradient(to bottom,#a8a8a8 0 1px,transparent 1px 2px)"></div>
<div style="left:111px;top:366px;width:1px;height:31px;background:repeating-linear-gradient(to bottom,#a8a8a8 0 1px,transparent 1px 2px)"></div>
<div style="left:111px;top:442px;width:1px;height:11px;background:repeating-linear-gradient(to bottom,#a8a8a8 0 1px,transparent 1px 2px)"></div>
<div style="left:131px;top:461px;width:1px;height:12px;background:repeating-linear-gradient(to bottom,#a8a8a8 0 1px,transparent 1px 2px)"></div>
<div style="left:71px;top:499px;width:1px;height:88px;background:repeating-linear-gradient(to bottom,#a8a8a8 0 1px,transparent 1px 2px)"></div>
<div style="left:16px;top:130px;width:4px;height:1px;background:repeating-linear-gradient(to right,#a8a8a8 0 1px,transparent 1px 2px)"></div>
<svg style="left:6px;top:125px" width="9" height="9" viewBox="0 0 9 9" ><rect x="0.5" y="0.5" width="8" height="8" fill="#fff" stroke="#9dbac4" rx="1"/><path d="M1 6.5 H8 M1 7.5 H8" stroke="#e4e8ea"/><path d="M2.5 4.5 H6.5" stroke="#000"/></svg>
<svg style="left:21px;top:122px" width="16" height="16" viewBox="0 0 16 16" ><path d="M1 0.5 H4.5 V3" fill="none" stroke="#777" stroke-dasharray="1 1"/><path d="M7.5 2.5 H12.5 L15 5 V12.5 H7.5 Z" fill="#fbf28a" stroke="#666" stroke-width="0.8"/><path d="M9 4.5 H13 M9 6.5 H14 M9 8.5 H14" stroke="#e8d800" stroke-dasharray="1 1"/><path d="M3.5 5.5 H9.5 L12 8 V15.5 H3.5 Z" fill="#fff" stroke="#333"/><path d="M9.5 5.5 V8 H12" fill="none" stroke="#333" stroke-width="0.8"/><path d="M5.5 9.5 H10 M5.5 11.5 H10 M5.5 13.5 H10" stroke="#777"/></svg>
<div class="t" style="left:42.5px;top:124px;font-size:11px;letter-spacing:-0.001px;font-style:italic;">Untitled1</div>
<div style="left:36px;top:149px;width:4px;height:1px;background:repeating-linear-gradient(to right,#a8a8a8 0 1px,transparent 1px 2px)"></div>
<svg style="left:26px;top:144px" width="9" height="9" viewBox="0 0 9 9" ><rect x="0.5" y="0.5" width="8" height="8" fill="#fff" stroke="#9dbac4" rx="1"/><path d="M1 6.5 H8 M1 7.5 H8" stroke="#e4e8ea"/><path d="M2.5 4.5 H6.5" stroke="#000"/></svg>
<svg style="left:41px;top:141px" width="16" height="16" viewBox="0 0 16 16" ><path d="M1.5 3.5 L4.5 1.5 H14.5 V13.5 L12 15.5 H1.5 Z" fill="#8e8e8e" stroke="#222" stroke-width="0.9"/><path d="M1.5 3.5 L4.5 1.5 H14.5 L12 3.5 Z" fill="#e8e8e8" stroke="#222" stroke-width="0.6"/><rect x="1.5" y="3.5" width="10.5" height="12" fill="#c6c6c6" stroke="#222" stroke-width="0.9"/><path d="M2.5 4.5 V14.5 M7.7 4.5 V14.5" stroke="#eee" stroke-width="1"/><path d="M6.7 3.5 V15.5" stroke="#333"/><rect x="3.6" y="6" width="2" height="1.8" fill="#18c818"/><rect x="8.8" y="6" width="2" height="1.8" fill="#c81818"/></svg>
<div class="t" style="left:62.5px;top:143px;font-size:11px;letter-spacing:-0.216px;font-style:italic;">Device (XF325-W)</div>
<div style="left:56px;top:168px;width:4px;height:1px;background:repeating-linear-gradient(to right,#a8a8a8 0 1px,transparent 1px 2px)"></div>
<svg style="left:46px;top:163px" width="9" height="9" viewBox="0 0 9 9" ><rect x="0.5" y="0.5" width="8" height="8" fill="#fff" stroke="#9dbac4" rx="1"/><path d="M1 6.5 H8 M1 7.5 H8" stroke="#e4e8ea"/><path d="M2.5 4.5 H6.5" stroke="#000"/></svg>
<svg style="left:61px;top:160px" width="16" height="16" viewBox="0 0 16 16" ><path d="M0.5 1.5 H6.5 L9.5 4.5 V14.5 H0.5 Z" fill="#fff" stroke="#000"/><path d="M6.5 1.5 V4.5 H9.5" fill="none" stroke="#000" stroke-width="0.8"/><path d="M2.5 5.5 H6 M2.5 7.5 H7.5 M2.5 9.5 H7.5 M2.5 11.5 H7.5" stroke="#1a1ae0"/><rect x="12" y="1.5" width="3.6" height="12.5" rx="1.8" fill="none" stroke="#1a1ae0" stroke-width="1.1"/><path d="M10.8 10 L12.2 12.6 L13.6 10" fill="none" stroke="#1a1ae0" stroke-width="1.1"/></svg>
<div class="t" style="left:82.5px;top:162px;font-size:11px;letter-spacing:-0.661px;">PLC Logic</div>
<div style="left:76px;top:187px;width:4px;height:1px;background:repeating-linear-gradient(to right,#a8a8a8 0 1px,transparent 1px 2px)"></div>
<svg style="left:66px;top:182px" width="9" height="9" viewBox="0 0 9 9" ><rect x="0.5" y="0.5" width="8" height="8" fill="#fff" stroke="#9dbac4" rx="1"/><path d="M1 6.5 H8 M1 7.5 H8" stroke="#e4e8ea"/><path d="M2.5 4.5 H6.5" stroke="#000"/></svg>
<svg style="left:81px;top:179px" width="16" height="16" viewBox="0 0 16 16" ><circle cx="8" cy="8" r="5.2" fill="none" stroke="#8e8eb8" stroke-width="3.6"/><circle cx="8" cy="8" r="6.8" fill="none" stroke="#7a7aa8" stroke-width="1.8" stroke-dasharray="2.6 2.7"/><circle cx="8" cy="8" r="3" fill="#fff" stroke="#666" stroke-width="0.6"/></svg>
<div class="t" style="left:102.5px;top:181px;font-size:11px;letter-spacing:0.192px;font-weight:bold;">Application</div>
<div style="left:91px;top:206px;width:9px;height:1px;background:repeating-linear-gradient(to right,#a8a8a8 0 1px,transparent 1px 2px)"></div>
<svg style="left:101px;top:198px" width="16" height="16" viewBox="0 0 16 16" ><path d="M1.5 0.5 H9.5 L12.5 3.5 V14.5 H1.5 Z" fill="#fff" stroke="#333"/><path d="M3.5 3.5 H9 M3.5 5.5 H10 M3.5 7.5 H10 M3.5 9.5 H8 M3.5 11.5 H8" stroke="#4a6ad0"/><ellipse cx="11.5" cy="13.5" rx="3.2" ry="1.4" fill="#f0c040" stroke="#8a6a10" stroke-width="0.7"/><ellipse cx="11.5" cy="11.5" rx="3.2" ry="1.4" fill="#f0c040" stroke="#8a6a10" stroke-width="0.7"/><ellipse cx="11.5" cy="9.5" rx="3.2" ry="1.4" fill="#f6d560" stroke="#8a6a10" stroke-width="0.7"/></svg>
<div class="t" style="left:122.5px;top:200px;font-size:11px;letter-spacing:-0.234px;">Bill of Materials</div>
<div style="left:91px;top:225px;width:9px;height:1px;background:repeating-linear-gradient(to right,#a8a8a8 0 1px,transparent 1px 2px)"></div>
<svg style="left:101px;top:217px" width="16" height="16" viewBox="0 0 16 16" ><path d="M1.5 0.5 H9.5 L12.5 3.5 V14.5 H1.5 Z" fill="#fff" stroke="#333"/><path d="M3.5 3.5 H9 M3.5 5.5 H10 M3.5 7.5 H10" stroke="#666"/><rect x="3" y="9" width="11" height="6" rx="1" fill="#bdbdbd" stroke="#333" stroke-width="0.8"/><rect x="4.5" y="10" width="7" height="2.6" fill="#1818c0"/><path d="M5 14 H12" stroke="#444" stroke-dasharray="1 1"/></svg>
<div class="t" style="left:122.5px;top:219px;font-size:11px;letter-spacing:-0.037px;">Configuration and Cons...</div>
<div style="left:96px;top:244px;width:4px;height:1px;background:repeating-linear-gradient(to right,#a8a8a8 0 1px,transparent 1px 2px)"></div>
<svg style="left:86px;top:239px" width="9" height="9" viewBox="0 0 9 9" ><rect x="0.5" y="0.5" width="8" height="8" fill="#fff" stroke="#9dbac4" rx="1"/><path d="M1 6.5 H8 M1 7.5 H8" stroke="#e4e8ea"/><path d="M2.5 4.5 H6.5 M4.5 2.5 V6.5" stroke="#000"/></svg>
<svg style="left:101px;top:236px" width="16" height="16" viewBox="0 0 16 16" ><path d="M1 3.8 Q1 2.5 2.2 2.5 H5.8 Q6.6 2.5 7 3.2 L7.6 4.5 H13.8 Q15 4.5 15 5.7 V12.8 Q15 14 13.8 14 H2.2 Q1 14 1 12.8 Z" fill="#f2cf6e" stroke="#c08a28" stroke-width="0.9"/><path d="M1.6 6.3 H14.4 V12.8 Q14.4 13.4 13.8 13.4 H2.2 Q1.6 13.4 1.6 12.8 Z" fill="#ffeeb0"/><path d="M1.6 12 H14.4 V12.8 Q14.4 13.4 13.8 13.4 H2.2 Q1.6 13.4 1.6 12.8 Z" fill="#f6d888"/></svg>
<div class="t" style="left:122.5px;top:238px;font-size:11px;letter-spacing:-0.688px;">SystemGVLs</div>
<div style="left:96px;top:263px;width:4px;height:1px;background:repeating-linear-gradient(to right,#a8a8a8 0 1px,transparent 1px 2px)"></div>
<svg style="left:86px;top:258px" width="9" height="9" viewBox="0 0 9 9" ><rect x="0.5" y="0.5" width="8" height="8" fill="#fff" stroke="#9dbac4" rx="1"/><path d="M1 6.5 H8 M1 7.5 H8" stroke="#e4e8ea"/><path d="M2.5 4.5 H6.5 M4.5 2.5 V6.5" stroke="#000"/></svg>
<svg style="left:101px;top:255px" width="16" height="16" viewBox="0 0 16 16" ><path d="M1 3.8 Q1 2.5 2.2 2.5 H5.8 Q6.6 2.5 7 3.2 L7.6 4.5 H13.8 Q15 4.5 15 5.7 V12.8 Q15 14 13.8 14 H2.2 Q1 14 1 12.8 Z" fill="#f2cf6e" stroke="#c08a28" stroke-width="0.9"/><path d="M1.6 6.3 H14.4 V12.8 Q14.4 13.4 13.8 13.4 H2.2 Q1.6 13.4 1.6 12.8 Z" fill="#ffeeb0"/><path d="M1.6 12 H14.4 V12.8 Q14.4 13.4 13.8 13.4 H2.2 Q1.6 13.4 1.6 12.8 Z" fill="#f6d888"/></svg>
<div class="t" style="left:122.5px;top:257px;font-size:11px;letter-spacing:-0.531px;">SystemPOUs</div>
<div style="left:96px;top:282px;width:4px;height:1px;background:repeating-linear-gradient(to right,#a8a8a8 0 1px,transparent 1px 2px)"></div>
<svg style="left:86px;top:277px" width="9" height="9" viewBox="0 0 9 9" ><rect x="0.5" y="0.5" width="8" height="8" fill="#fff" stroke="#9dbac4" rx="1"/><path d="M1 6.5 H8 M1 7.5 H8" stroke="#e4e8ea"/><path d="M2.5 4.5 H6.5" stroke="#000"/></svg>
<svg style="left:101px;top:274px" width="16" height="16" viewBox="0 0 16 16" ><path d="M1 3.8 Q1 2.5 2.2 2.5 H5.8 Q6.6 2.5 7 3.2 L7.6 4.5 H13.8 Q15 4.5 15 5.7 V12.8 Q15 14 13.8 14 H2.2 Q1 14 1 12.8 Z" fill="#f2cf6e" stroke="#c08a28" stroke-width="0.9"/><path d="M1.6 6.3 H14.4 V12.8 Q14.4 13.4 13.8 13.4 H2.2 Q1.6 13.4 1.6 12.8 Z" fill="#ffeeb0"/><path d="M1.6 12 H14.4 V12.8 Q14.4 13.4 13.8 13.4 H2.2 Q1.6 13.4 1.6 12.8 Z" fill="#f6d888"/></svg>
<div class="t" style="left:122.5px;top:276px;font-size:11px;letter-spacing:-0.779px;">UserGVLs</div>
<div style="left:111px;top:301px;width:9px;height:1px;background:repeating-linear-gradient(to right,#a8a8a8 0 1px,transparent 1px 2px)"></div>
<svg style="left:121px;top:293px" width="16" height="16" viewBox="0 0 16 16" ><circle cx="8" cy="8.3" r="6.3" fill="#1f5fd0" stroke="#0c2a78" stroke-width="0.8"/><path d="M4.2 5 Q6.5 3 8.8 4 Q9.6 6 7.6 7 Q7 9.4 5.2 8.8 Q3.6 7 4.2 5 Z M9.4 8.2 Q11.8 7.4 12.8 9 Q12.6 11.8 10.4 13 Q9 11.2 9.4 8.2 Z M6 11 Q7.4 10.6 7.8 12.4 Q6.8 13.4 5.6 12.6 Z" fill="#2fae2f"/><circle cx="6" cy="5.4" r="1.6" fill="#bfe0ff" opacity="0.55"/><ellipse cx="8" cy="8.3" rx="8.3" ry="2.6" transform="rotate(-38 8 8.3)" fill="none" stroke="#a8d8ff" stroke-width="1"/></svg>
<div class="t" style="left:142.5px;top:295px;font-size:11px;letter-spacing:-0.435px;">Disables</div>
<div style="left:111px;top:320px;width:9px;height:1px;background:repeating-linear-gradient(to right,#a8a8a8 0 1px,transparent 1px 2px)"></div>
<svg style="left:121px;top:312px" width="16" height="16" viewBox="0 0 16 16" ><circle cx="8" cy="8.3" r="6.3" fill="#1f5fd0" stroke="#0c2a78" stroke-width="0.8"/><path d="M4.2 5 Q6.5 3 8.8 4 Q9.6 6 7.6 7 Q7 9.4 5.2 8.8 Q3.6 7 4.2 5 Z M9.4 8.2 Q11.8 7.4 12.8 9 Q12.6 11.8 10.4 13 Q9 11.2 9.4 8.2 Z M6 11 Q7.4 10.6 7.8 12.4 Q6.8 13.4 5.6 12.6 Z" fill="#2fae2f"/><circle cx="6" cy="5.4" r="1.6" fill="#bfe0ff" opacity="0.55"/><ellipse cx="8" cy="8.3" rx="8.3" ry="2.6" transform="rotate(-38 8 8.3)" fill="none" stroke="#a8d8ff" stroke-width="1"/></svg>
<div class="t" style="left:142.5px;top:314px;font-size:11px;letter-spacing:-0.233px;">Qualities</div>
<div style="left:111px;top:339px;width:9px;height:1px;background:repeating-linear-gradient(to right,#a8a8a8 0 1px,transparent 1px 2px)"></div>
<svg style="left:121px;top:331px" width="16" height="16" viewBox="0 0 16 16" ><circle cx="8" cy="8.3" r="6.3" fill="#1f5fd0" stroke="#0c2a78" stroke-width="0.8"/><path d="M4.2 5 Q6.5 3 8.8 4 Q9.6 6 7.6 7 Q7 9.4 5.2 8.8 Q3.6 7 4.2 5 Z M9.4 8.2 Q11.8 7.4 12.8 9 Q12.6 11.8 10.4 13 Q9 11.2 9.4 8.2 Z M6 11 Q7.4 10.6 7.8 12.4 Q6.8 13.4 5.6 12.6 Z" fill="#2fae2f"/><circle cx="6" cy="5.4" r="1.6" fill="#bfe0ff" opacity="0.55"/><ellipse cx="8" cy="8.3" rx="8.3" ry="2.6" transform="rotate(-38 8 8.3)" fill="none" stroke="#a8d8ff" stroke-width="1"/></svg>
<div class="t" style="left:142.5px;top:333px;font-size:11px;letter-spacing:-0.295px;">ReqDiagnostics</div>
<div style="left:96px;top:358px;width:4px;height:1px;background:repeating-linear-gradient(to right,#a8a8a8 0 1px,transparent 1px 2px)"></div>
<svg style="left:86px;top:353px" width="9" height="9" viewBox="0 0 9 9" ><rect x="0.5" y="0.5" width="8" height="8" fill="#fff" stroke="#9dbac4" rx="1"/><path d="M1 6.5 H8 M1 7.5 H8" stroke="#e4e8ea"/><path d="M2.5 4.5 H6.5" stroke="#000"/></svg>
<svg style="left:101px;top:350px" width="16" height="16" viewBox="0 0 16 16" ><path d="M1 3.8 Q1 2.5 2.2 2.5 H5.8 Q6.6 2.5 7 3.2 L7.6 4.5 H13.8 Q15 4.5 15 5.7 V12.8 Q15 14 13.8 14 H2.2 Q1 14 1 12.8 Z" fill="#f2cf6e" stroke="#c08a28" stroke-width="0.9"/><path d="M1.6 6.3 H14.4 V12.8 Q14.4 13.4 13.8 13.4 H2.2 Q1.6 13.4 1.6 12.8 Z" fill="#ffeeb0"/><path d="M1.6 12 H14.4 V12.8 Q14.4 13.4 13.8 13.4 H2.2 Q1.6 13.4 1.6 12.8 Z" fill="#f6d888"/></svg>
<div class="t" style="left:122.5px;top:352px;font-size:11px;letter-spacing:-0.645px;">UserPOUs</div>
<div style="left:111px;top:377px;width:9px;height:1px;background:repeating-linear-gradient(to right,#a8a8a8 0 1px,transparent 1px 2px)"></div>
<svg style="left:121px;top:369px" width="16" height="16" viewBox="0 0 16 16" ><path d="M2.5 0.5 H10.5 L13.5 3.5 V15.5 H2.5 Z" fill="#fff" stroke="#333"/><path d="M10.5 0.5 V3.5 H13.5" fill="none" stroke="#333"/><path d="M3 8.5 H6 M10 8.5 H12.5" stroke="#1414e0" stroke-width="1.4"/><path d="M6.3 4.5 V12.5 M9.6 4.5 V12.5" stroke="#1414e0" stroke-width="1.8"/></svg>
<div class="t" style="left:142.5px;top:371px;font-size:11px;letter-spacing:-0.247px;">StartPrg (PRG)</div>
<div style="left:111px;top:396px;width:9px;height:1px;background:repeating-linear-gradient(to right,#a8a8a8 0 1px,transparent 1px 2px)"></div>
<svg style="left:121px;top:388px" width="16" height="16" viewBox="0 0 16 16" ><path d="M2.5 0.5 H10.5 L13.5 3.5 V15.5 H2.5 Z" fill="#fff" stroke="#333"/><path d="M10.5 0.5 V3.5 H13.5" fill="none" stroke="#333"/><path d="M3 8.5 H6 M10 8.5 H12.5" stroke="#1414e0" stroke-width="1.4"/><path d="M6.3 4.5 V12.5 M9.6 4.5 V12.5" stroke="#1414e0" stroke-width="1.8"/></svg>
<div class="t" style="left:142.5px;top:390px;font-size:11px;letter-spacing:-0.443px;">UserPrg (PRG)</div>
<div style="left:91px;top:415px;width:9px;height:1px;background:repeating-linear-gradient(to right,#a8a8a8 0 1px,transparent 1px 2px)"></div>
<svg style="left:101px;top:407px" width="16" height="16" viewBox="0 0 16 16" ><path d="M1.5 4.5 L3.5 2.5 H6 V15 H1.5 Z" fill="#28a0a0" stroke="#000" stroke-width="0.9"/><path d="M6 6 L7.5 4.5 H10.5 V15 H6 Z" fill="#e02020" stroke="#000" stroke-width="0.9"/><path d="M10.5 5 L12 3.5 H15 V15 H10.5 Z" fill="#f0e020" stroke="#000" stroke-width="0.9"/></svg>
<div class="t" style="left:122.5px;top:409px;font-size:11px;letter-spacing:-0.212px;">Library Manager</div>
<div style="left:96px;top:434px;width:4px;height:1px;background:repeating-linear-gradient(to right,#a8a8a8 0 1px,transparent 1px 2px)"></div>
<svg style="left:86px;top:429px" width="9" height="9" viewBox="0 0 9 9" ><rect x="0.5" y="0.5" width="8" height="8" fill="#fff" stroke="#9dbac4" rx="1"/><path d="M1 6.5 H8 M1 7.5 H8" stroke="#e4e8ea"/><path d="M2.5 4.5 H6.5" stroke="#000"/></svg>
<svg style="left:101px;top:426px" width="16" height="16" viewBox="0 0 16 16" ><path d="M1.5 3.5 L3.5 1.5 H14.5 V12.5 L12.5 14.5 H1.5 Z" fill="#cfcfcf" stroke="#444"/><rect x="1.5" y="3.5" width="11" height="11" fill="#e2e2e2" stroke="#444"/><path d="M5 3.5 V14.5 M8.7 3.5 V14.5" stroke="#555"/><rect x="3" y="6" width="1.2" height="1.6" fill="#18a818"/><rect x="6.4" y="6" width="1.2" height="1.6" fill="#d01818"/><rect x="10" y="6" width="1.2" height="1.6" fill="#d01818"/><path d="M10 7.5 l1 2 l2.2-.6 l-.6 2.2 l2 1 l-2 1 l.6 2.2 l-2.2-.6 l-1 2 l-1-2 l-2.2.6 l.6-2.2 l-2-1 l2-1 l-.6-2.2 l2.2.6 z" fill="#f0d020" stroke="#8a6a00" stroke-width="0.6"/></svg>
<div class="t" style="left:122.5px;top:428px;font-size:11px;letter-spacing:-0.078px;">Task Configuration</div>
<div style="left:116px;top:453px;width:4px;height:1px;background:repeating-linear-gradient(to right,#a8a8a8 0 1px,transparent 1px 2px)"></div>
<svg style="left:106px;top:448px" width="9" height="9" viewBox="0 0 9 9" ><rect x="0.5" y="0.5" width="8" height="8" fill="#fff" stroke="#9dbac4" rx="1"/><path d="M1 6.5 H8 M1 7.5 H8" stroke="#e4e8ea"/><path d="M2.5 4.5 H6.5" stroke="#000"/></svg>
<svg style="left:121px;top:445px" width="16" height="16" viewBox="0 0 16 16" ><path d="M1 11 L8 8 L15 11 L8 14.5 Z" fill="#fff" stroke="#222" stroke-width="0.9"/><path d="M1 9 L8 6 L15 9 L8 12.5 Z" fill="#fff" stroke="#222" stroke-width="0.9"/><path d="M1 7 L8 4 L15 7 L8 10.5 Z" fill="#fff" stroke="#222" stroke-width="0.9"/><path d="M7 0.5 H9.5 V3.5 H11.5 L8.2 7 L5 3.5 H7 Z" fill="#1838c0"/></svg>
<div class="t" style="left:142.5px;top:447px;font-size:11px;letter-spacing:-0.245px;">MainTask</div>
<div style="left:131px;top:472px;width:9px;height:1px;background:repeating-linear-gradient(to right,#a8a8a8 0 1px,transparent 1px 2px)"></div>
<svg style="left:141px;top:464px" width="16" height="16" viewBox="0 0 16 16" ><path d="M4.5 0.5 H11.5 L14.5 3.5 V15.5 H4.5 Z" fill="#fff" stroke="#222"/><path d="M10 6.5 H13 M10 8.5 H13 M10 10.5 H13" stroke="#555"/><rect x="6" y="3.5" width="4" height="4.5" fill="#fff" stroke="#d02020"/><rect x="1.5" y="8.5" width="4" height="4" fill="#fff" stroke="#18a018"/><rect x="6" y="9.5" width="4" height="4" fill="#fff" stroke="#2020c0"/></svg>
<div class="t" style="left:162.5px;top:466px;font-size:11px;letter-spacing:-0.480px;">MainPrg</div>
<div style="left:56px;top:491px;width:4px;height:1px;background:repeating-linear-gradient(to right,#a8a8a8 0 1px,transparent 1px 2px)"></div>
<svg style="left:46px;top:486px" width="9" height="9" viewBox="0 0 9 9" ><rect x="0.5" y="0.5" width="8" height="8" fill="#fff" stroke="#9dbac4" rx="1"/><path d="M1 6.5 H8 M1 7.5 H8" stroke="#e4e8ea"/><path d="M2.5 4.5 H6.5" stroke="#000"/></svg>
<svg style="left:61px;top:483px" width="16" height="16" viewBox="0 0 16 16" ><path d="M1.5 3.5 L4.5 1.5 H14.5 V13.5 L12 15.5 H1.5 Z" fill="#8e8e8e" stroke="#222" stroke-width="0.9"/><path d="M1.5 3.5 L4.5 1.5 H14.5 L12 3.5 Z" fill="#e8e8e8" stroke="#222" stroke-width="0.6"/><rect x="1.5" y="3.5" width="10.5" height="12" fill="#c6c6c6" stroke="#222" stroke-width="0.9"/><path d="M2.5 4.5 V14.5 M7.7 4.5 V14.5" stroke="#eee" stroke-width="1"/><path d="M6.7 3.5 V15.5" stroke="#333"/><rect x="3.6" y="6" width="2" height="1.8" fill="#18c818"/><rect x="8.8" y="6" width="2" height="1.8" fill="#c81818"/></svg>
<div class="t" style="left:82.5px;top:485px;font-size:11px;letter-spacing:-0.420px;">CPU (XF325-W)</div>
<div style="left:71px;top:510px;width:9px;height:1px;background:repeating-linear-gradient(to right,#a8a8a8 0 1px,transparent 1px 2px)"></div>
<svg style="left:81px;top:502px" width="16" height="16" viewBox="0 0 16 16" ><path d="M2 2 L5 2 L9 7.5 L7.5 8.5 Z" fill="#1838d0" stroke="#1030a0" stroke-width="0.6"/><path d="M6 9 Q8.5 6.5 11 9 V11 H6 Z" fill="#d8d8d8" stroke="#222" stroke-width="0.9"/><ellipse cx="8.5" cy="12" rx="4.3" ry="2" fill="#9a9a9a" stroke="#222" stroke-width="0.9"/></svg>
<div class="t" style="left:102.5px;top:504px;font-size:11px;letter-spacing:-0.547px;">COM 1</div>
<div style="left:71px;top:529px;width:9px;height:1px;background:repeating-linear-gradient(to right,#a8a8a8 0 1px,transparent 1px 2px)"></div>
<svg style="left:81px;top:521px" width="16" height="16" viewBox="0 0 16 16" ><path d="M2 2 L5 2 L9 7.5 L7.5 8.5 Z" fill="#1838d0" stroke="#1030a0" stroke-width="0.6"/><path d="M6 9 Q8.5 6.5 11 9 V11 H6 Z" fill="#d8d8d8" stroke="#222" stroke-width="0.9"/><ellipse cx="8.5" cy="12" rx="4.3" ry="2" fill="#9a9a9a" stroke="#222" stroke-width="0.9"/></svg>
<div class="t" style="left:102.5px;top:523px;font-size:11px;letter-spacing:-0.595px;">NET 1</div>
<div style="left:71px;top:548px;width:9px;height:1px;background:repeating-linear-gradient(to right,#a8a8a8 0 1px,transparent 1px 2px)"></div>
<svg style="left:81px;top:540px" width="16" height="16" viewBox="0 0 16 16" ><path d="M2 2 L5 2 L9 7.5 L7.5 8.5 Z" fill="#1838d0" stroke="#1030a0" stroke-width="0.6"/><path d="M6 9 Q8.5 6.5 11 9 V11 H6 Z" fill="#d8d8d8" stroke="#222" stroke-width="0.9"/><ellipse cx="8.5" cy="12" rx="4.3" ry="2" fill="#9a9a9a" stroke="#222" stroke-width="0.9"/></svg>
<div class="t" style="left:102.5px;top:542px;font-size:11px;letter-spacing:-0.595px;">NET 2</div>
<div style="left:71px;top:567px;width:9px;height:1px;background:repeating-linear-gradient(to right,#a8a8a8 0 1px,transparent 1px 2px)"></div>
<svg style="left:81px;top:559px" width="16" height="16" viewBox="0 0 16 16" ><path d="M2 2 L5 2 L9 7.5 L7.5 8.5 Z" fill="#1838d0" stroke="#1030a0" stroke-width="0.6"/><path d="M6 9 Q8.5 6.5 11 9 V11 H6 Z" fill="#d8d8d8" stroke="#222" stroke-width="0.9"/><ellipse cx="8.5" cy="12" rx="4.3" ry="2" fill="#9a9a9a" stroke="#222" stroke-width="0.9"/></svg>
<div class="t" style="left:102.5px;top:561px;font-size:11px;letter-spacing:-0.908px;">CAN</div>
<div style="left:71px;top:586px;width:9px;height:1px;background:repeating-linear-gradient(to right,#a8a8a8 0 1px,transparent 1px 2px)"></div>
<svg style="left:81px;top:578px" width="16" height="16" viewBox="0 0 16 16" ><path d="M2 2 L5 2 L9 7.5 L7.5 8.5 Z" fill="#1838d0" stroke="#1030a0" stroke-width="0.6"/><path d="M6 9 Q8.5 6.5 11 9 V11 H6 Z" fill="#d8d8d8" stroke="#222" stroke-width="0.9"/><ellipse cx="8.5" cy="12" rx="4.3" ry="2" fill="#9a9a9a" stroke="#222" stroke-width="0.9"/></svg>
<div class="t" style="left:102.5px;top:580px;font-size:11px;letter-spacing:-1.473px;">BUS</div>
<svg style="left:1407px;top:126px" width="9" height="9" viewBox="0 0 9 9" ><rect x="0.5" y="0.5" width="8" height="8" fill="#fff" stroke="#9dbac4" rx="1"/><path d="M1 6.5 H8 M1 7.5 H8" stroke="#e4e8ea"/><path d="M2.5 4.5 H6.5 M4.5 2.5 V6.5" stroke="#000"/></svg>
<div class="t" style="left:1424px;top:124px;font-size:11px;letter-spacing:0.448px;font-weight:bold;">General</div>
<svg style="left:1407px;top:145px" width="9" height="9" viewBox="0 0 9 9" ><rect x="0.5" y="0.5" width="8" height="8" fill="#fff" stroke="#9dbac4" rx="1"/><path d="M1 6.5 H8 M1 7.5 H8" stroke="#e4e8ea"/><path d="M2.5 4.5 H6.5 M4.5 2.5 V6.5" stroke="#000"/></svg>
<div class="t" style="left:1424px;top:143px;font-size:11px;letter-spacing:0.434px;font-weight:bold;">Boolean Operators</div>
<svg style="left:1407px;top:164px" width="9" height="9" viewBox="0 0 9 9" ><rect x="0.5" y="0.5" width="8" height="8" fill="#fff" stroke="#9dbac4" rx="1"/><path d="M1 6.5 H8 M1 7.5 H8" stroke="#e4e8ea"/><path d="M2.5 4.5 H6.5 M4.5 2.5 V6.5" stroke="#000"/></svg>
<div class="t" style="left:1424px;top:162px;font-size:11px;letter-spacing:0.601px;font-weight:bold;">Math Operators</div>
<svg style="left:1407px;top:183px" width="9" height="9" viewBox="0 0 9 9" ><rect x="0.5" y="0.5" width="8" height="8" fill="#fff" stroke="#9dbac4" rx="1"/><path d="M1 6.5 H8 M1 7.5 H8" stroke="#e4e8ea"/><path d="M2.5 4.5 H6.5 M4.5 2.5 V6.5" stroke="#000"/></svg>
<div class="t" style="left:1424px;top:181px;font-size:11px;letter-spacing:0.549px;font-weight:bold;">Other Operators</div>
<svg style="left:1407px;top:202px" width="9" height="9" viewBox="0 0 9 9" ><rect x="0.5" y="0.5" width="8" height="8" fill="#fff" stroke="#9dbac4" rx="1"/><path d="M1 6.5 H8 M1 7.5 H8" stroke="#e4e8ea"/><path d="M2.5 4.5 H6.5" stroke="#000"/></svg>
<div class="t" style="left:1424px;top:200px;font-size:11px;letter-spacing:0.136px;font-weight:bold;">Function Blocks</div>
<svg style="left:1442px;top:218px" width="16" height="16" viewBox="0 0 16 16" ><rect x="3.5" y="4.5" width="9" height="9" fill="#8c96f6" stroke="#1414e6"/><path d="M0.5 5.5 H3.5 M0.5 12.5 H3.5 M12.5 5.5 H15.5" stroke="#1414e6"/><path d="M5.5 11.5 H8 V6.5 H10.5" stroke="#000" fill="none"/></svg>
<div class="t" style="left:1464px;top:219px;font-size:11px;letter-spacing:-0.489px;">R_TRIG</div>
<svg style="left:1442px;top:237px" width="16" height="16" viewBox="0 0 16 16" ><rect x="3.5" y="4.5" width="9" height="9" fill="#8c96f6" stroke="#1414e6"/><path d="M0.5 5.5 H3.5 M0.5 12.5 H3.5 M12.5 5.5 H15.5" stroke="#1414e6"/><path d="M5.5 6.5 H8 V11.5 H10.5" stroke="#000" fill="none"/></svg>
<div class="t" style="left:1464px;top:238px;font-size:11px;letter-spacing:-0.468px;">F_TRIG</div>
<svg style="left:1442px;top:256px" width="16" height="16" viewBox="0 0 16 16" ><rect x="3.5" y="4.5" width="9" height="9" fill="#8c96f6" stroke="#1414e6"/><path d="M0.5 5.5 H3.5 M0.5 12.5 H3.5 M12.5 5.5 H15.5" stroke="#1414e6"/><path d="M5.5 6.5 H10.5 M5.5 9 H10.5 M8 9 V11.5 M6 11.5 H10" stroke="#000" fill="none" stroke-width="0.9"/></svg>
<div class="t" style="left:1464px;top:257px;font-size:11px;letter-spacing:-1.041px;">RS</div>
<svg style="left:1442px;top:275px" width="16" height="16" viewBox="0 0 16 16" ><rect x="3.5" y="4.5" width="9" height="9" fill="#8c96f6" stroke="#1414e6"/><path d="M0.5 5.5 H3.5 M0.5 12.5 H3.5 M12.5 5.5 H15.5" stroke="#1414e6"/><path d="M5.5 11.5 H10.5 M7.5 11.5 V6.5 H10.5 M5.5 9 H9" stroke="#000" fill="none" stroke-width="0.9"/></svg>
<div class="t" style="left:1464px;top:276px;font-size:11px;letter-spacing:-1.391px;">SR</div>
<svg style="left:1442px;top:294px" width="16" height="16" viewBox="0 0 16 16" ><rect x="3.5" y="4.5" width="9" height="9" fill="#8c96f6" stroke="#1414e6"/><path d="M0.5 5.5 H3.5 M0.5 12.5 H3.5 M12.5 5.5 H15.5 M12.5 12.5 H15.5" stroke="#1414e6"/><circle cx="8" cy="9" r="2.8" fill="#b8befa" stroke="#000" stroke-width="0.9"/><path d="M6.8 10.2 L9.2 7.8" stroke="#c02020" stroke-width="0.9"/></svg>
<div class="t" style="left:1464px;top:295px;font-size:11px;letter-spacing:-0.540px;">TON</div>
<svg style="left:1442px;top:313px" width="16" height="16" viewBox="0 0 16 16" ><rect x="3.5" y="4.5" width="9" height="9" fill="#8c96f6" stroke="#1414e6"/><path d="M0.5 5.5 H3.5 M0.5 12.5 H3.5 M12.5 5.5 H15.5 M12.5 12.5 H15.5" stroke="#1414e6"/><circle cx="8" cy="9" r="2.8" fill="#b8befa" stroke="#000" stroke-width="0.9"/><path d="M6.8 7.8 L9.2 10.2" stroke="#c02020" stroke-width="0.9"/></svg>
<div class="t" style="left:1464px;top:314px;font-size:11px;letter-spacing:-0.498px;">TOF</div>
<svg style="left:1442px;top:332px" width="16" height="16" viewBox="0 0 16 16" ><rect x="4" y="5.5" width="8" height="6.5" fill="#7a86f4" stroke="#1414e6"/><path d="M0.5 5.5 H4 M0.5 8.5 H4 M0.5 11.5 H4 M12 5.5 H15.5 M12 8.5 H15.5" stroke="#1414e6"/><text x="8" y="11" font-size="6.5" font-weight="bold" text-anchor="middle" fill="#000" font-family="Liberation Sans,sans-serif">+1</text></svg>
<div class="t" style="left:1464px;top:333px;font-size:11px;letter-spacing:-0.769px;">CTU</div>
<div style="left:1442px;top:349px;width:158px;height:20px;border:1px solid #b4b4b4;border-right:none;background:#f4f4f4"></div>
<svg style="left:1442px;top:351px" width="16" height="16" viewBox="0 0 16 16" ><rect x="4" y="5.5" width="8" height="6.5" fill="#7a86f4" stroke="#1414e6"/><path d="M0.5 5.5 H4 M0.5 8.5 H4 M0.5 11.5 H4 M12 5.5 H15.5 M12 8.5 H15.5" stroke="#1414e6"/><text x="8" y="11" font-size="6.5" font-weight="bold" text-anchor="middle" fill="#000" font-family="Liberation Sans,sans-serif">-1</text></svg>
<div class="t" style="left:1464px;top:352px;font-size:11px;letter-spacing:-0.769px;">CTD</div>
<svg style="left:1407px;top:373px" width="9" height="9" viewBox="0 0 9 9" ><rect x="0.5" y="0.5" width="8" height="8" fill="#fff" stroke="#9dbac4" rx="1"/><path d="M1 6.5 H8 M1 7.5 H8" stroke="#e4e8ea"/><path d="M2.5 4.5 H6.5" stroke="#000"/></svg>
<div class="t" style="left:1424px;top:371px;font-size:11px;letter-spacing:0.404px;font-weight:bold;">Ladder Elements</div>
<svg style="left:1442px;top:389px" width="16" height="16" viewBox="0 0 16 16" ><path d="M1.5 2.5 V14.5 H14.5" stroke="#1414e6" fill="none" stroke-width="1.2"/><path d="M1.5 2.5 H4" stroke="#1414e6" stroke-width="1.2"/><path d="M4.5 5 V13" stroke="#1414e6"/><path d="M9 3.5 H15 M9 5.5 H15 M9 7.5 H15" stroke="#888" stroke-dasharray="1 1"/><path d="M6.5 0.5 V7.5 M3 4 H10 M4 1.5 L9 6.5 M9 1.5 L4 6.5" stroke="#e6c800" stroke-width="1"/></svg>
<div class="t" style="left:1464px;top:390px;font-size:11px;letter-spacing:0.337px;">Network</div>
<svg style="left:1442px;top:408px" width="16" height="16" viewBox="0 0 16 16" ><path d="M1 8.5 H3.5 M12.5 8.5 H15" stroke="#1414e6" stroke-width="1.2"/><rect x="3.6" y="5.5" width="2.4" height="6.5" fill="none" stroke="#1414e6" stroke-width="1.2"/><rect x="10" y="5.5" width="2.4" height="6.5" fill="none" stroke="#1414e6" stroke-width="1.2"/></svg>
<div class="t" style="left:1464px;top:409px;font-size:11px;letter-spacing:0.028px;">Contact</div>
<svg style="left:1442px;top:427px" width="16" height="16" viewBox="0 0 16 16" ><path d="M1 8.5 H3.5 M12.5 8.5 H15" stroke="#1414e6" stroke-width="1.2"/><rect x="3.6" y="5.5" width="2.4" height="6.5" fill="none" stroke="#1414e6" stroke-width="1.2"/><rect x="10" y="5.5" width="2.4" height="6.5" fill="none" stroke="#1414e6" stroke-width="1.2"/><path d="M6.7 12 L9.5 5.5" stroke="#000" stroke-width="1.2"/></svg>
<div class="t" style="left:1464px;top:428px;font-size:11px;letter-spacing:0.186px;">Negated contact</div>
<svg style="left:1442px;top:446px" width="16" height="16" viewBox="0 0 16 16" ><path d="M2.5 1.5 V8.5 H4 M13.5 1.5 V8.5 H12" stroke="#1414e6" stroke-width="1.2" fill="none"/><rect x="4" y="5.5" width="2.2" height="6.5" fill="none" stroke="#1414e6" stroke-width="1.2"/><rect x="9.8" y="5.5" width="2.2" height="6.5" fill="none" stroke="#1414e6" stroke-width="1.2"/></svg>
<div class="t" style="left:1464px;top:447px;font-size:11px;letter-spacing:0.069px;">Parallel contact</div>
<svg style="left:1442px;top:465px" width="16" height="16" viewBox="0 0 16 16" ><path d="M2.5 1.5 V8.5 H4 M13.5 1.5 V8.5 H12" stroke="#1414e6" stroke-width="1.2" fill="none"/><rect x="4" y="5.5" width="2.2" height="6.5" fill="none" stroke="#1414e6" stroke-width="1.2"/><rect x="9.8" y="5.5" width="2.2" height="6.5" fill="none" stroke="#1414e6" stroke-width="1.2"/><path d="M6.7 12 L9.5 5.5" stroke="#000" stroke-width="1.2"/></svg>
<div class="t" style="left:1464px;top:466px;font-size:11px;letter-spacing:0.124px;">Parallel negated contact</div>
<svg style="left:1442px;top:484px" width="16" height="16" viewBox="0 0 16 16" ><path d="M12.5 8.5 H15.5" stroke="#1414e6" stroke-width="1.2"/><path d="M5.5 5 L1.5 8.5 L5.5 12 L4 8.5 Z" fill="#1414e6" stroke="#1414e6" stroke-width="0.8"/><path d="M10 5 Q13.5 8.5 10 12 Q11.5 8.5 10 5 Z" fill="#1414e6" stroke="#1414e6" stroke-width="1"/></svg>
<div class="t" style="left:1464px;top:485px;font-size:11px;letter-spacing:-0.062px;">Coil</div>
<svg style="left:1442px;top:503px" width="16" height="16" viewBox="0 0 16 16" ><path d="M12.5 8.5 H15.5" stroke="#1414e6" stroke-width="1.2"/><path d="M5.5 5 L1.5 8.5 L5.5 12 L4 8.5 Z" fill="#1414e6" stroke="#1414e6" stroke-width="0.8"/><path d="M10 5 Q13.5 8.5 10 12 Q11.5 8.5 10 5 Z" fill="#1414e6" stroke="#1414e6" stroke-width="1"/><text x="8" y="11" font-size="6.5" font-weight="bold" text-anchor="middle" fill="#000" font-family="Liberation Sans,sans-serif">S</text></svg>
<div class="t" style="left:1464px;top:504px;font-size:11px;letter-spacing:-0.034px;">Set coil</div>
<svg style="left:1442px;top:522px" width="16" height="16" viewBox="0 0 16 16" ><path d="M12.5 8.5 H15.5" stroke="#1414e6" stroke-width="1.2"/><path d="M5.5 5 L1.5 8.5 L5.5 12 L4 8.5 Z" fill="#1414e6" stroke="#1414e6" stroke-width="0.8"/><path d="M10 5 Q13.5 8.5 10 12 Q11.5 8.5 10 5 Z" fill="#1414e6" stroke="#1414e6" stroke-width="1"/><text x="8" y="11" font-size="6.5" font-weight="bold" text-anchor="middle" fill="#000" font-family="Liberation Sans,sans-serif">R</text></svg>
<div class="t" style="left:1464px;top:523px;font-size:11px;letter-spacing:0.070px;">Reset coil</div>
<svg style="left:1442px;top:541px" width="16" height="16" viewBox="0 0 16 16" ><rect x="3.5" y="4.5" width="9" height="9" fill="#8c96f6" stroke="#1414e6"/><path d="M0.5 5.5 H3.5 M0.5 12.5 H3.5 M12.5 5.5 H15.5 M12.5 12.5 H15.5" stroke="#1414e6"/><circle cx="8" cy="9" r="2.8" fill="#b8befa" stroke="#000" stroke-width="0.9"/><path d="M6.8 10.2 L9.2 7.8" stroke="#c02020" stroke-width="0.9"/></svg>
<div class="t" style="left:1464px;top:542px;font-size:11px;letter-spacing:-0.540px;">TON</div>
<svg style="left:1442px;top:560px" width="16" height="16" viewBox="0 0 16 16" ><rect x="3.5" y="4.5" width="9" height="9" fill="#8c96f6" stroke="#1414e6"/><path d="M0.5 5.5 H3.5 M0.5 12.5 H3.5 M12.5 5.5 H15.5 M12.5 12.5 H15.5" stroke="#1414e6"/><circle cx="8" cy="9" r="2.8" fill="#b8befa" stroke="#000" stroke-width="0.9"/><path d="M6.8 7.8 L9.2 10.2" stroke="#c02020" stroke-width="0.9"/></svg>
<div class="t" style="left:1464px;top:561px;font-size:11px;letter-spacing:-0.498px;">TOF</div>
<svg style="left:1442px;top:579px" width="16" height="16" viewBox="0 0 16 16" ><rect x="4" y="5.5" width="8" height="6.5" fill="#7a86f4" stroke="#1414e6"/><path d="M0.5 5.5 H4 M0.5 8.5 H4 M0.5 11.5 H4 M12 5.5 H15.5 M12 8.5 H15.5" stroke="#1414e6"/><text x="8" y="11" font-size="6.5" font-weight="bold" text-anchor="middle" fill="#000" font-family="Liberation Sans,sans-serif">+1</text></svg>
<div class="t" style="left:1464px;top:580px;font-size:11px;letter-spacing:-0.769px;">CTU</div>
<svg style="left:1442px;top:598px" width="16" height="16" viewBox="0 0 16 16" ><rect x="4" y="5.5" width="8" height="6.5" fill="#7a86f4" stroke="#1414e6"/><path d="M0.5 5.5 H4 M0.5 8.5 H4 M0.5 11.5 H4 M12 5.5 H15.5 M12 8.5 H15.5" stroke="#1414e6"/><text x="8" y="11" font-size="6.5" font-weight="bold" text-anchor="middle" fill="#000" font-family="Liberation Sans,sans-serif">-1</text></svg>
<div class="t" style="left:1464px;top:599px;font-size:11px;letter-spacing:-0.769px;">CTD</div>
<svg style="left:1442px;top:617px" width="16" height="16" viewBox="0 0 16 16" ><rect x="3.5" y="4.5" width="9" height="9" fill="#8c96f6" stroke="#1414e6"/><path d="M0.5 5.5 H3.5 M12.5 5.5 H15.5" stroke="#1414e6"/><path d="M6 8 H10 M6 10.5 H10" stroke="#000" stroke-width="1"/></svg>
<div class="t" style="left:1464px;top:618px;font-size:11px;letter-spacing:-0.698px;">MOVE</div>
<svg style="left:1442px;top:636px" width="16" height="16" viewBox="0 0 16 16" ><path d="M1 8.5 H8" stroke="#1414e6" stroke-width="1.3"/><path d="M8.5 4.5 L13.5 8.5 L8.5 12.5 Z" fill="none" stroke="#1414e6" stroke-width="1.2"/></svg>
<div class="t" style="left:1464px;top:637px;font-size:11px;letter-spacing:-0.299px;">Jump</div>
<svg style="left:1442px;top:655px" width="16" height="16" viewBox="0 0 16 16" ><path d="M5.5 5.5 L1.5 8.5 L5.5 11.5 Z" fill="none" stroke="#1414e6" stroke-width="1.1"/><text x="6" y="11" font-size="6.5" font-weight="bold" fill="#000" font-family="Liberation Sans,sans-serif" textLength="10" lengthAdjust="spacingAndGlyphs">RET</text></svg>
<div class="t" style="left:1464px;top:656px;font-size:11px;letter-spacing:-0.186px;">Return</div>
<svg style="left:1442px;top:674px" width="16" height="16" viewBox="0 0 16 16" ><path d="M1 4.5 H15 M7.5 4.5 V12.5 H13" stroke="#1414e6" stroke-width="1.2" fill="none"/></svg>
<div class="t" style="left:1464px;top:675px;font-size:11px;letter-spacing:-0.292px;">Branch</div>
<svg style="left:1442px;top:693px" width="16" height="16" viewBox="0 0 16 16" ><path d="M1 8.5 H15 M8 8.5 V14" stroke="#1414e6" stroke-width="1.1" fill="none"/><path d="M6 12.5 L8 15 L10 12.5" stroke="#1414e6" fill="none"/><path d="M8 1.5 V8 M4.5 4.5 H11.5 M5.5 2.5 L10.5 6.5 M10.5 2.5 L5.5 6.5" stroke="#f04040" stroke-width="0.9"/></svg>
<div class="t" style="left:1464px;top:694px;font-size:11px;letter-spacing:-0.079px;">Branch Start/End</div>
<svg style="left:1407px;top:715px" width="9" height="9" viewBox="0 0 9 9" ><rect x="0.5" y="0.5" width="8" height="8" fill="#fff" stroke="#9dbac4" rx="1"/><path d="M1 6.5 H8 M1 7.5 H8" stroke="#e4e8ea"/><path d="M2.5 4.5 H6.5 M4.5 2.5 V6.5" stroke="#000"/></svg>
<div class="t" style="left:1424px;top:713px;font-size:11px;letter-spacing:-0.189px;font-weight:bold;">POUs</div>
<div style="left:253px;top:97px;width:1143px;height:759px;background:#f0f0f0;border:1px solid #9a9a9a"></div>
<div style="left:254px;top:117px;width:1141px;height:1px;background:#a4a4a4"></div>
<div style="left:254px;top:118px;width:1141px;height:1px;background:#f6f6f6"></div>
<svg style="left:254px;top:98px" width="112" height="21" viewBox="0 0 112 21" ><path d="M2 19.5 L18.5 3.6 Q19.6 2.5 21 2.5 H107 Q110.5 2.5 110.5 6 V19.5 Z" fill="#fff"/><path d="M0 19.5 H2 L18.5 3.6 Q19.6 2.5 21 2.5 H107 Q110.5 2.5 110.5 6 V19.5" fill="none" stroke="#8e8e8e"/><rect x="2.6" y="19" width="107.4" height="2" fill="#fff"/></svg>
<svg style="left:274px;top:102px" width="14" height="16" viewBox="0 0 14 16" ><path d="M0.5 0.5 H8.5 L12.5 4.5 V15.5 H0.5 Z" fill="#f4f4f4" stroke="#777"/><path d="M0.5 15 H12.5 M12.5 4.5 V15.5" stroke="#000" stroke-width="1.2" fill="none"/><path d="M8.5 0.5 V4.5 H12.5" fill="#fff" stroke="#000" stroke-width="0.9"/><path d="M1 7.5 H3.5 M8.5 7.5 H10.5" stroke="#1414f0" stroke-width="1.3"/><path d="M4.3 4 V11 M7.6 4 V11" stroke="#1414f0" stroke-width="1.8"/></svg>
<div class="t" style="left:296px;top:102.2px;font-size:11px;letter-spacing:0.315px;font-weight:bold;">UserPrg</div>
<svg style="left:350px;top:105.5px" width="10" height="10" viewBox="0 0 10 10" ><path d="M1.2 1.2 L8.3 8.3 M8.3 1.2 L1.2 8.3" stroke="#000" stroke-width="1.9"/></svg>
<svg style="left:1380.5px;top:106.7px" width="12" height="8" viewBox="0 0 12 8" ><path d="M1 1.5 H10 L5.5 6 Z" fill="#000"/></svg>
<div style="left:254px;top:119px;width:1101px;height:99px;background:#fff"></div>
<div style="left:301px;top:119px;width:2px;height:99px;background:#d4d4d4"></div>
<div class="c" style="left:256px;top:121.4px;width:44px;text-align:right;color:#5a8ac8;font-size:10.5px">8</div>
<div class="c" style="left:353px;top:122.2px;font-size:11.67px">LOAD_2: <span style="color:#1414d0">BOOL</span>;</div>
<div class="c" style="left:256px;top:138.4px;width:44px;text-align:right;color:#5a8ac8;font-size:10.5px">9</div>
<div class="c" style="left:353px;top:139.2px;font-size:11.67px">SET_PV: <span style="color:#1414d0">WORD</span>;</div>
<div class="c" style="left:256px;top:155.4px;width:44px;text-align:right;color:#5a8ac8;font-size:10.5px">10</div>
<div class="c" style="left:353px;top:156.2px;font-size:11.67px">Pulse_Count: <span style="color:#1414d0">WORD</span>;</div>
<div class="c" style="left:256px;top:172.4px;width:44px;text-align:right;color:#b02030;font-size:10.5px">11</div>
<div class="c" style="left:353px;top:173.2px;font-size:11.67px">MOTOR: <span style="color:#1414d0">BOOL</span>;</div>
<div class="c" style="left:256px;top:189.4px;width:44px;text-align:right;color:#5a8ac8;font-size:10.5px">12</div>
<div class="c" style="left:353px;top:190.2px;font-size:11.67px">Output_1: <span style="color:#1414d0">BOOL</span>;</div>
<div style="left:1355px;top:119px;width:16px;height:99px;background:#f0f0f0"></div>
<div style="left:1362px;top:169px;width:2px;height:18px;background:#7a7a7a"></div>
<div style="left:1371px;top:119px;width:23px;height:99px;background:linear-gradient(to right,#fbfbf6,#e6e6d8 55%,#b4b4a0)"></div>
<div style="left:1371px;top:121px;width:21px;height:20px;background:#e8eefb;border:1px solid #3a6ad0"></div>
<svg style="left:1374px;top:124px" width="14" height="14" viewBox="0 0 14 14" ><path d="M0 1.5 H6" stroke="#1a1ae0" stroke-width="1.2"/><path d="M2 3.5 H12 M2 5.5 H12 M2 7.5 H11" stroke="#000" stroke-dasharray="3 1"/><path d="M2 9.5 H12" stroke="#18a018" stroke-width="1.2"/><path d="M2 11.5 H10" stroke="#000"/><path d="M0 13.5 H9" stroke="#1a1ae0" stroke-width="1.2"/></svg>
<svg style="left:1373px;top:146px" width="16" height="16" viewBox="0 0 16 16" ><rect x="1.5" y="1.5" width="13" height="12" fill="#fff" stroke="#000" stroke-width="1"/><path d="M1 1.5 H15" stroke="#1a1ae0" stroke-width="2"/><path d="M1 5.5 H15 M1 8.5 H15 M1 11.5 H15" stroke="#999"/><path d="M5.5 3 V14 M10.5 3 V14" stroke="#999"/></svg>
<div style="left:1286px;top:198px;width:47px;height:20px;background:#f0f0f0;border:1px solid #c4c4c4"></div>
<div class="t" style="left:1300px;top:204px;font-size:11px;color:#223;height:9px;overflow:hidden">100</div>
<div style="left:1334px;top:198px;width:21px;height:20px;background:#f0f0f0;border:1px solid #c4c4c4"></div>
<svg style="left:1337px;top:200px" width="17" height="17" viewBox="0 0 17 17" ><path d="M1.5 5.5 H8 V15.5 H1.5 Z" fill="#ddd" stroke="#222"/><circle cx="8.5" cy="6" r="4.8" fill="#eef" fill-opacity="0.7" stroke="#111" stroke-width="1.4"/><path d="M6 4.5 H10 M6 6.5 H10" stroke="#20b0c0"/><path d="M12 9.5 L16 14" stroke="#000" stroke-width="2.2"/></svg>
<div style="left:254px;top:218px;width:1141px;height:6px;background:#f0f0f0;border-top:1px solid #a0a0a0;border-bottom:1px solid #c0c0c0"></div>
<svg style="left:811px;top:217px" width="30" height="8" viewBox="0 0 30 8" ><path d="M1 6.5 L6 1.5 L11 6.5 Z M16 1.5 L21 6.5 L26 1.5 Z" fill="#888" stroke="#666" stroke-width="0.6"/></svg>
<div style="left:254px;top:224px;width:1141px;height:615px;background:#fff"></div>
<div style="left:256px;top:226px;width:44px;height:255px;background:#f7e1e7;border:1px dotted #000"></div>
<div class="t" style="left:257px;top:225px;width:42px;text-align:right;color:#128498;font-size:11px">1</div>
<div class="t" style="left:257px;top:484px;width:42px;text-align:right;color:#128498;font-size:11px">2</div>
<div style="left:301px;top:224px;width:2px;height:517px;background:#148080"></div>
<div style="left:303px;top:224px;width:16px;height:517px;background:#f4f4f4"></div>
<div style="left:321px;top:224px;width:1074px;height:258px;background:#ffffe1"></div>
<div style="left:303px;top:482px;width:1092px;height:1px;background:#c8c8c8"></div>
<div style="left:303px;top:741px;width:1092px;height:1px;background:#d8d8d8"></div>
<div style="left:332px;top:224px;width:1px;height:519px;background:#000"></div>
<div style="left:350px;top:277px;width:72px;height:18px;background:#d0d0d0"></div>
<div style="left:350px;top:349px;width:72px;height:18px;background:#d0d0d0"></div>
<div style="left:359px;top:421px;width:72px;height:18px;background:#d0d0d0"></div>
<div style="left:467px;top:260px;width:72px;height:18px;background:#d0d0d0"></div>
<div style="left:332px;top:321px;width:45px;height:1px;background:#000"></div>
<div style="left:396px;top:321px;width:53px;height:1px;background:#000"></div>
<div style="left:377px;top:313px;width:4px;height:17px;border:1px solid #2a4a90;background:#eef2fc"></div><div style="left:392px;top:313px;width:4px;height:17px;border:1px solid #2a4a90;background:#eef2fc"></div>
<div style="left:332px;top:393px;width:45px;height:1px;background:#000"></div>
<div style="left:396px;top:393px;width:53px;height:1px;background:#000"></div>
<div style="left:377px;top:385px;width:4px;height:17px;border:1px solid #2a4a90;background:#eef2fc"></div><div style="left:392px;top:385px;width:4px;height:17px;border:1px solid #2a4a90;background:#eef2fc"></div>
<div style="left:432px;top:446px;width:17px;height:1px;background:#000"></div>
<div style="left:449px;top:296px;width:108px;height:168px;background:#e3e9f6;border:1px solid #1c3060"></div>
<div class="c" style="left:403.5px;top:279.2px;width:200px;text-align:center;font-size:12.1px;">CTD_0</div>
<div class="c" style="left:403.5px;top:300.2px;width:200px;text-align:center;font-size:12.1px;font-weight:bold">CTD</div>
<svg style="left:489px;top:314px" width="31" height="27" viewBox="0 0 31 27" ><path d="M0.5 0.5 V3.5 H3.5 V0.5 H6.5 V3.5 H9.5 V0.5 H12.5 V3.5 H15.5 V0.5 H18.5 V3.5 H21.5 V0.5 H24.5 V3.5 H27.5 V0.5 H30.5 V3.5" stroke="#1a8a1a" fill="none"/><rect x="0.5" y="5.5" width="30" height="11" fill="#b4b4b4" stroke="#333"/><path d="M10.5 5.5 V16.5 M20.5 5.5 V16.5" stroke="#333"/><text x="5.5" y="15" font-size="11" fill="#f02828" text-anchor="middle" font-family="Liberation Mono,monospace">7</text><text x="15.5" y="15" font-size="11" fill="#f02828" text-anchor="middle" font-family="Liberation Mono,monospace">2</text><text x="25.5" y="15" font-size="11" fill="#f02828" text-anchor="middle" font-family="Liberation Mono,monospace">8</text><path d="M15.5 18 V23" stroke="#f01010" stroke-width="2"/><path d="M12 22 H19 L15.5 26.5 Z" fill="#f01010"/></svg>
<div class="c" style="left:452px;top:316.2px;font-size:12.1px;">CD</div>
<div class="c" style="left:452px;top:388.2px;font-size:12.1px;">LOAD</div>
<div class="c" style="left:452px;top:441.2px;font-size:12.1px;">PV</div>
<div class="c" style="left:353px;top:316.2px;width:200px;text-align:right;font-size:12.1px;">Q</div>
<div class="c" style="left:286.5px;top:296.2px;width:200px;text-align:center;font-size:12.1px;">Input_00</div>
<div class="c" style="left:286.5px;top:368.2px;width:200px;text-align:center;font-size:12.1px;">LOAD</div>
<div class="c" style="left:228px;top:440.2px;width:200px;text-align:right;font-size:12.1px;color:#a09a10">10</div>
<div class="c" style="left:353px;top:334.2px;width:200px;text-align:right;font-size:12.1px;">CV</div>
<div style="left:556px;top:321px;width:32px;height:1px;background:#000"></div>
<div style="left:556px;top:339px;width:10px;height:1px;background:#000"></div>
<div style="left:566px;top:332px;width:19px;height:16px;background:#ffffe8;border:1px solid #dcdcf2"></div>
<div style="left:350px;top:536px;width:72px;height:18px;background:#d0d0d0"></div>
<div style="left:350px;top:608px;width:72px;height:18px;background:#d0d0d0"></div>
<div style="left:359px;top:680px;width:72px;height:18px;background:#d0d0d0"></div>
<div style="left:467px;top:519px;width:72px;height:18px;background:#d0d0d0"></div>
<div style="left:332px;top:580px;width:45px;height:1px;background:#000"></div>
<div style="left:396px;top:580px;width:53px;height:1px;background:#000"></div>
<div style="left:377px;top:572px;width:4px;height:17px;border:1px solid #2a4a90;background:#eef2fc"></div><div style="left:392px;top:572px;width:4px;height:17px;border:1px solid #2a4a90;background:#eef2fc"></div>
<div style="left:332px;top:652px;width:45px;height:1px;background:#000"></div>
<div style="left:396px;top:652px;width:53px;height:1px;background:#000"></div>
<div style="left:377px;top:644px;width:4px;height:17px;border:1px solid #2a4a90;background:#eef2fc"></div><div style="left:392px;top:644px;width:4px;height:17px;border:1px solid #2a4a90;background:#eef2fc"></div>
<div style="left:432px;top:705px;width:17px;height:1px;background:#000"></div>
<div style="left:449px;top:555px;width:109px;height:168px;background:#e3e9f6;border:1px solid #1c3060"></div>
<div class="c" style="left:403.5px;top:538.2px;width:200px;text-align:center;font-size:12.1px;">CTD_1</div>
<div class="c" style="left:403.5px;top:559.2px;width:200px;text-align:center;font-size:12.1px;font-weight:bold">CTD</div>
<svg style="left:489px;top:573px" width="31" height="27" viewBox="0 0 31 27" ><path d="M0.5 0.5 V3.5 H3.5 V0.5 H6.5 V3.5 H9.5 V0.5 H12.5 V3.5 H15.5 V0.5 H18.5 V3.5 H21.5 V0.5 H24.5 V3.5 H27.5 V0.5 H30.5 V3.5" stroke="#1a8a1a" fill="none"/><rect x="0.5" y="5.5" width="30" height="11" fill="#b4b4b4" stroke="#333"/><path d="M10.5 5.5 V16.5 M20.5 5.5 V16.5" stroke="#333"/><text x="5.5" y="15" font-size="11" fill="#f02828" text-anchor="middle" font-family="Liberation Mono,monospace">7</text><text x="15.5" y="15" font-size="11" fill="#f02828" text-anchor="middle" font-family="Liberation Mono,monospace">2</text><text x="25.5" y="15" font-size="11" fill="#f02828" text-anchor="middle" font-family="Liberation Mono,monospace">8</text><path d="M15.5 18 V23" stroke="#f01010" stroke-width="2"/><path d="M12 22 H19 L15.5 26.5 Z" fill="#f01010"/></svg>
<div class="c" style="left:452px;top:575.2px;font-size:12.1px;">CD</div>
<div class="c" style="left:452px;top:647.2px;font-size:12.1px;">LOAD</div>
<div class="c" style="left:452px;top:700.2px;font-size:12.1px;">PV</div>
<div class="c" style="left:353px;top:575.2px;width:200px;text-align:right;font-size:12.1px;">Q</div>
<div class="c" style="left:286.5px;top:555.2px;width:200px;text-align:center;font-size:12.1px;">Input_00</div>
<div class="c" style="left:286.5px;top:627.2px;width:200px;text-align:center;font-size:12.1px;">LOAD_2</div>
<div class="c" style="left:228px;top:699.2px;width:200px;text-align:right;font-size:12.1px;">SET_PV</div>
<div class="c" style="left:353px;top:610.2px;width:200px;text-align:right;font-size:12.1px;">CV</div>
<div style="left:557px;top:615px;width:10px;height:1px;background:#000"></div>
<div style="left:566px;top:591px;width:72px;height:18px;background:#d0d0d0"></div>
<div class="c" style="left:571px;top:610.2px;font-size:12.1px;">Pulse_Count</div>
<div style="left:557px;top:580px;width:758px;height:1px;background:#000"></div>
<div style="left:1288px;top:536px;width:72px;height:18px;background:#d0d0d0"></div>
<div class="c" style="left:1224.5px;top:555.2px;width:200px;text-align:center;font-size:12.1px;">Output_1</div>
<svg style="left:1313px;top:571px" width="24" height="20" viewBox="0 0 24 20" ><path d="M6.5 1.5 Q1 9.5 6.5 17.5 M4 1.5 Q-1.5 9.5 4 17.5 M4 1.5 H6.5 M4 17.5 H6.5" stroke="#2a4a90" fill="none"/><path d="M15.5 1.5 Q21 9.5 15.5 17.5 M18 1.5 Q23.5 9.5 18 17.5 M15.5 1.5 H18 M15.5 17.5 H18" stroke="#2a4a90" fill="none"/></svg>
<div style="left:301px;top:263px;width:148px;height:223px;border:3px solid #ff0000"></div>
<div style="left:556px;top:260px;width:94px;height:221px;border:3px solid #ff0000"></div>
<div style="left:304px;top:523px;width:146px;height:219px;border:3px solid #ff0000"></div>
<div style="left:558px;top:524px;width:830px;height:220px;border:3px solid #ff0000"></div>
<div class="t" style="left:760px;top:319.0px;line-height:20px;height:20px;color:#ee1c25;font-size:17px;letter-spacing:0.391px;">Output parameters will always be optional in</div>
<div class="t" style="left:760px;top:342.33px;line-height:20px;height:20px;color:#ee1c25;font-size:17px;letter-spacing:0.299px;">function blocks because the block's own</div>
<div class="t" style="left:760px;top:365.66px;line-height:20px;height:20px;color:#ee1c25;font-size:17px;letter-spacing:0.238px;">internal variables can be used to</div>
<div class="t" style="left:760px;top:388.99px;line-height:20px;height:20px;color:#ee1c25;font-size:17px;letter-spacing:0.270px;">move/analyze the respective value</div>
<div style="left:1250px;top:818px;width:20px;height:20px;background:#fff;border:1px solid #a8a8a8"></div>
<svg style="left:1254px;top:820px" width="12" height="16" viewBox="0 0 12 16" ><path d="M2 1 V13 L5 10 L7.2 15 L9 14.2 L6.8 9.5 H10.5 Z" fill="#000"/></svg>
<div style="left:1269px;top:818px;width:21px;height:20px;background:#f0f0f0;border:1px solid #a8a8a8"></div>
<svg style="left:1272px;top:820px" width="16" height="16" viewBox="0 0 16 16" ><path d="M8 1.5 V14.5 M1.5 8 H14.5" stroke="#000" stroke-width="1.2"/><path d="M6 3.5 L8 1 L10 3.5 M6 12.5 L8 15 L10 12.5 M3.5 6 L1 8 L3.5 10 M12.5 6 L15 8 L12.5 10" fill="none" stroke="#000"/></svg>
<div style="left:1289px;top:818px;width:22px;height:20px;background:#f0f0f0;border:1px solid #a8a8a8"></div>
<svg style="left:1292px;top:820px" width="16" height="16" viewBox="0 0 16 16" ><circle cx="6.5" cy="6.5" r="4.8" fill="#d8ecff" stroke="#666" stroke-width="1.3"/><path d="M10 10 L15 15" stroke="#c8a020" stroke-width="2.6"/></svg>
<div style="left:1330px;top:818px;width:45px;height:20px;background:#f0f0f0;border:1px solid #a8a8a8"></div>
<div class="t" style="left:1336px;top:822px;font-size:11px">100 %</div>
<div style="left:1375px;top:818px;width:20px;height:20px;background:#f0f0f0;border:1px solid #a8a8a8"></div>
<svg style="left:1377px;top:820px" width="17" height="17" viewBox="0 0 17 17" ><path d="M1.5 5.5 H8 V15.5 H1.5 Z" fill="#ddd" stroke="#222"/><circle cx="8.5" cy="6" r="4.8" fill="#eef" fill-opacity="0.7" stroke="#111" stroke-width="1.4"/><path d="M6 4.5 H10 M6 6.5 H10" stroke="#20b0c0"/><path d="M12 9.5 L16 14" stroke="#000" stroke-width="2.2"/></svg>
<div style="left:254px;top:839px;width:1141px;height:16px;background:#f0f0f0"></div>
<div style="left:271px;top:846px;width:39px;height:2px;background:#7a7a7a"></div>
</body></html>
